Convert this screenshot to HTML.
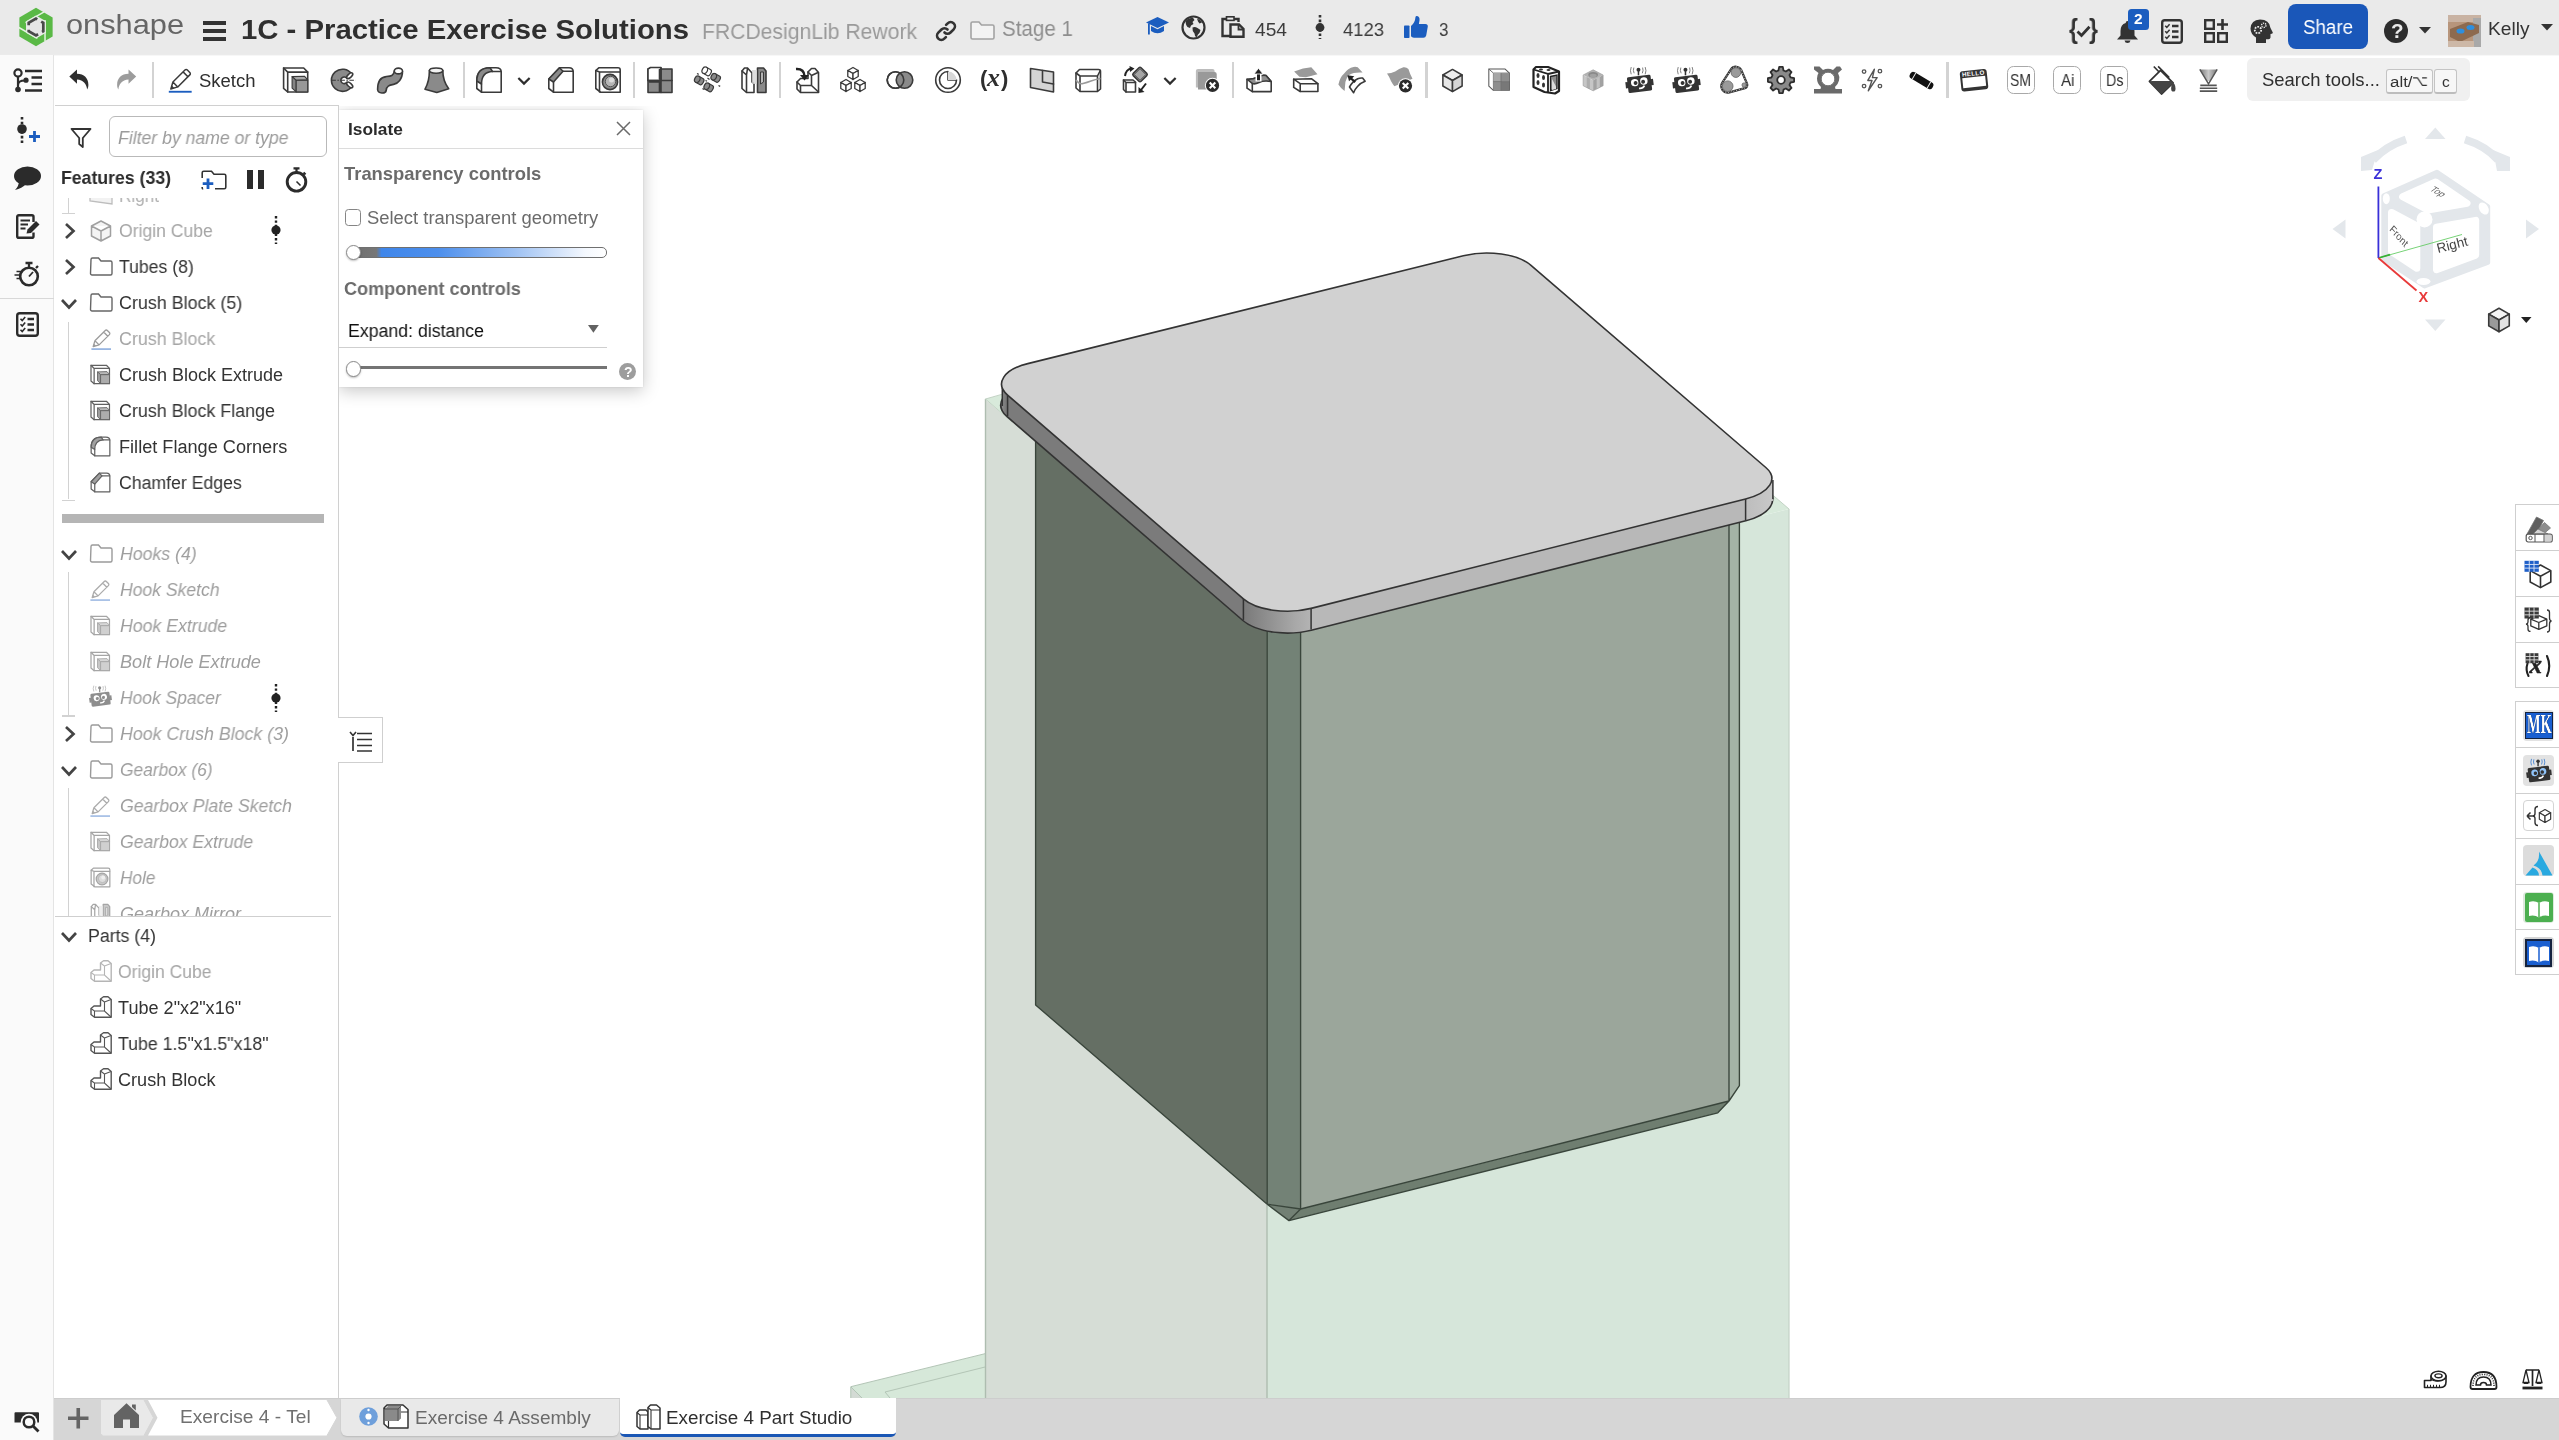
<!DOCTYPE html><html lang="en"><head><meta charset="utf-8"><title>1C - Practice Exercise Solutions | Exercise 4 Part Studio</title><style>
*{box-sizing:border-box;margin:0;padding:0}
html,body{width:2559px;height:1440px;overflow:hidden;background:#fff}
body{font-family:"Liberation Sans",sans-serif;color:#333;position:relative;font-size:18px}
.abs{position:absolute}
.t{position:absolute;white-space:nowrap;line-height:1;transform-origin:0 50%;will-change:transform}
.b{font-weight:bold}
.i{font-style:italic}
.g{color:#a3a3a3}
svg{overflow:visible}
.ic{position:absolute}
</style></head><body>
<svg id="model" width="2559" height="1440" viewBox="0 0 2559 1440" style="position:absolute;left:0;top:0">
<defs><linearGradient id="gB" x1="1244" x2="1312" y1="0" y2="0" gradientUnits="userSpaceOnUse"><stop offset="0" stop-color="#7a7a7a"/><stop offset="0.75" stop-color="#a8a8a8"/><stop offset="1" stop-color="#b4b4b4"/></linearGradient><linearGradient id="gR" x1="1746" x2="1773" y1="0" y2="0" gradientUnits="userSpaceOnUse"><stop offset="0" stop-color="#bdbdbd"/><stop offset="1" stop-color="#c8c8c8"/></linearGradient><linearGradient id="gL" x1="1002" x2="1008" y1="0" y2="0" gradientUnits="userSpaceOnUse"><stop offset="0" stop-color="#8a8a8a"/><stop offset="1" stop-color="#6e6e6e"/></linearGradient></defs>
<polygon points="850.8,1386.7 985,1353.7 985,1398 850.8,1398" fill="#d6e8d9"/>
<polygon points="850.8,1386.7 862.5,1398 850.8,1398" fill="#d3dad4"/>
<path d="M850.8,1386.7 L985,1353.7 M850.8,1386.7 L850.8,1398 M851,1387 L862,1398 M885,1392 L985,1367 M885,1392 L890,1398" stroke="#b3c5b6" stroke-width="1" fill="none"/>
<polygon points="985,399 1267.2,640.5 1267,1398 985,1398" fill="#d6ddd6"/>
<polygon points="1267.2,640.5 1789,509 1789,1398 1267,1398" fill="#d6e6da"/>
<polygon points="985,399 1507.3,265.9 1789,509 1267.2,640.5" fill="#d8eadb"/>
<path d="M985.5,399 V1398 M1267,1205 V1398" stroke="#aebdb0" stroke-width="1.4" fill="none"/><path d="M1789,509 V1398" stroke="#c3d2c6" stroke-width="1.2" fill="none"/>
<path d="M985.5,399 L1010,392 M985.5,399 L1012,422 M1789,509 L1768,491" stroke="#c3d3c5" stroke-width="1" fill="none"/>
<polygon points="1035.6,430 1267.2,630 1267.2,1204.2 1035.6,1005" fill="#656f64"/>
<polygon points="1267.2,620 1300.6,628 1300.6,1209 1267.2,1204.2" fill="#738276"/>
<polygon points="1300.6,628 1729,510 1729,1101 1300.6,1209" fill="#9ba69b"/>
<polygon points="1729,510 1739.4,508 1739.4,1085.6 1729,1101" fill="#a4b3a6"/>
<polygon points="1300.6,1209 1729,1101 1717.8,1112.8 1289,1220.6" fill="#6f7e70"/>
<polygon points="1267.2,1204.2 1300.6,1209 1289,1220.6" fill="#728074"/>
<path d="M1035.6,436 V1005 L1267.2,1204.2 L1289,1220.6 L1717.8,1112.8 L1729,1101 L1739.4,1085.6 V515 M1267.2,625 V1204.2 L1300.6,1209 V630 M1300.6,1209 L1289,1220.6 M1300.6,1209 L1729,1101 V520" stroke="#39453b" stroke-width="1.35" fill="none" stroke-linejoin="round"/>
<path d="M1531.0,286.3 L1531.0,286.3 C1517.9,275.0 1487.6,270.8 1463.3,276.8 L1027.8,384.6 C1003.5,390.6 994.5,404.7 1007.6,416.1 L1243.4,619.9 C1256.5,631.3 1286.8,635.6 1311.1,629.4 L1745.6,520.0 C1769.9,513.8 1778.9,499.8 1765.8,488.5 Z" fill="none" stroke="#333" stroke-width="3.2"/>
<rect x="1002.3" y="388" width="7" height="20" fill="url(#gL)"/>
<rect x="1760" y="481" width="12.9" height="20" fill="url(#gR)"/>
<path d="M1027.8,363.6 C1003.5,369.6 994.5,383.7 1007.6,395.1 L1007.6,416.1 C994.5,404.7 1003.5,390.6 1027.8,384.6 Z" fill="url(#gL)"/>
<path d="M1745.6,499.0 C1769.9,492.8 1778.9,478.8 1765.8,467.5 L1765.8,488.5 C1778.9,499.8 1769.9,513.8 1745.6,520.0 Z" fill="url(#gR)"/>
<path d="M1007.6,395.1 L1243.4,598.9 L1243.4,619.9 L1007.6,416.1 Z" fill="#7b7b7b"/>
<path d="M1311.1,608.4 L1745.6,499.0 L1745.6,520.0 L1311.1,629.4 Z" fill="#b8b8b8"/>
<path d="M1243.4,598.9 C1256.5,610.3 1286.8,614.6 1311.1,608.4 L1311.1,629.4 C1286.8,635.6 1256.5,631.3 1243.4,619.9 Z" fill="url(#gB)"/>
<path d="M1007.6,395.1 v21" stroke="#333" stroke-width="1.5"/>
<path d="M1243.4,598.9 v21" stroke="#333" stroke-width="1.5"/>
<path d="M1311.1,608.4 v21" stroke="#333" stroke-width="1.5"/>
<path d="M1745.6,499.0 v21" stroke="#333" stroke-width="1.5"/>
<path d="M1002.3,388 v18 M1772.9,480 v19" stroke="#333" stroke-width="1.5"/>
<path d="M1531.0,265.3 L1531.0,265.3 C1517.9,254.0 1487.6,249.8 1463.3,255.8 L1027.8,363.6 C1003.5,369.6 994.5,383.7 1007.6,395.1 L1243.4,598.9 C1256.5,610.3 1286.8,614.6 1311.1,608.4 L1745.6,499.0 C1769.9,492.8 1778.9,478.8 1765.8,467.5 Z" fill="#d1d1d1" stroke="#333" stroke-width="1.6"/>
</svg>
<div class="abs" style="left:0;top:0;width:2559px;height:53.500px;background:#eaeaea"></div>
<div class="abs" style="left:0;top:53.500px;width:2559px;height:2.200px;background:linear-gradient(#e5e5e5,#fdfdfd)"></div>
<div class="abs" style="left:0;top:55px;width:54px;height:1385px;background:#fafafa;border-right:1px solid #e4e4e4"></div>
<div class="abs" style="left:0;top:298px;width:54px;height:1px;background:#d8d8d8"></div>
<div class="abs" style="left:55px;top:105px;width:284px;height:1293px;background:#fff;border-top:1px solid #d0d0d0;border-right:1px solid #d0d0d0"></div>
<div class="abs" style="left:54px;top:1398px;width:2505px;height:42px;background:#d6d6d6"></div>
<svg class="ic" style="left:16.0px;top:6.3px;" width="40" height="42" viewBox="0 0 40 42"><g transform="translate(20,21)"><polygon points="0.00,-19.20 16.63,-9.60 16.63,9.60 0.00,19.20 -16.63,9.60 -16.63,-9.60" fill="#5ab946"/><polygon points="0.00,-11.52 9.98,-5.76 9.98,5.76 0.00,11.52 -9.98,5.76 -9.98,-5.76" fill="#eaeaea"/><path d="M9.02,-6.91 L9.02,14.59 M1.47,11.27 L-17.15,0.52 M-10.50,-4.36 L8.13,-15.11" stroke="#e4f3e0" stroke-width="1.500" fill="none"/><polygon points="0.00,-8.45 7.32,-4.22 7.32,4.22 0.00,8.45 -7.32,4.22 -7.32,-4.22" fill="#e6e6e6" stroke="#4a4a4a" stroke-width="2.700" stroke-dasharray="12.400 4.500" stroke-dashoffset="-6"/></g></svg>
<div class="t " style="left:66.4px;top:11.0px;font-size:28px;transform:scaleX(1.0985);color:#666;">onshape</div>
<svg class="ic" style="left:203.0px;top:19.5px;" width="23" height="22" viewBox="0 0 23 22"><path d="M0,3 H23 M0,11 H23 M0,19 H23" stroke="#333" stroke-width="4"/></svg>
<div class="t b" style="left:241.0px;top:15.8px;font-size:28px;transform:scaleX(1.0469);color:#2f2f2f;">1C - Practice Exercise Solutions</div>
<div class="t " style="left:702.0px;top:20.9px;font-size:22px;transform:scaleX(0.9610);color:#9a9a9a;">FRCDesignLib Rework</div>
<svg class="ic" style="left:935.0px;top:19.5px;" width="22" height="22" viewBox="0 0 22 22"><g fill="none" stroke="#333" stroke-width="2.6" stroke-linecap="round"><path d="M9.5,12.5 a4.2,4.2 0 0 0 6,0 l3.2,-3.2 a4.2,4.2 0 0 0 -6,-6 l-1.6,1.6"/><path d="M12.5,9.5 a4.2,4.2 0 0 0 -6,0 l-3.2,3.2 a4.2,4.2 0 0 0 6,6 l1.6,-1.6"/></g></svg>
<svg class="ic" style="left:969.5px;top:20.5px;" width="25" height="19" viewBox="0 0 25 19"><path d="M1,2.5 a1.5,1.5 0 0 1 1.5,-1.5 h6.5 l2.5,3 h11 a1.5,1.5 0 0 1 1.5,1.5 v11 a1.5,1.5 0 0 1 -1.5,1.5 h-20 a1.5,1.5 0 0 1 -1.5,-1.5 z" fill="#f3f3f3" stroke="#a3a3a3" stroke-width="1.6"/></svg>
<div class="t " style="left:1002.0px;top:18.1px;font-size:22px;transform:scaleX(0.9362);color:#8e8e8e;">Stage 1</div>
<svg class="ic" style="left:1146.0px;top:17.0px;" width="23" height="20" viewBox="0 0 23 20"><g fill="#1b5dbf"><polygon points="11.5,0 23,5.5 11.5,11 0,5.5"/><path d="M5,9 v5 q6.5,4.5 13,0 v-5 l-6.5,3.2 z"/><rect x="2" y="6.5" width="1.8" height="11"/></g></svg>
<svg class="ic" style="left:1181.0px;top:15.0px;" width="25" height="25" viewBox="0 0 25 25"><circle cx="12.500" cy="12.500" r="11" fill="#eaeaea" stroke="#333" stroke-width="2.200"/><path d="M5,5.500 Q8,2.500 12,2.800 L13.500,5 L11.500,7 L12.500,9 L10,10.500 L9,13 L6.500,12 Q4,9 5,5.500 Z M11.500,12.500 Q14,11.500 16.500,13 L19.500,15 Q19,18 17,19.500 L15.500,22.500 Q13.500,21 13.500,18.500 Q11,16 11.500,12.500 Z M16,3.500 Q19.500,4.500 21,7.500 L18.500,8.500 L17,6.500 Z" fill="#333"/></svg>
<svg class="ic" style="left:1220.5px;top:16.0px;" width="24" height="22" viewBox="0 0 24 22"><g fill="none" stroke="#333" stroke-width="2.4" stroke-linejoin="miter"><path d="M5.5,3 H1.5 V20 H9"/><path d="M13,3 H17.5 V6"/><rect x="5.5" y="0.8" width="7.5" height="3.6" stroke-width="1.6"/><path d="M9.5,8.500 H18 L22.5,13 V20.800 H9.500 Z"/><path d="M17.500,8.500 V13.500 H22.500" stroke-width="1.8"/></g></svg>
<div class="t " style="left:1254.5px;top:20.2px;font-size:19px;transform:scaleX(1.0095);color:#3c3c3c;">454</div>
<svg class="ic" style="left:1313.5px;top:15.0px;" width="12" height="24" viewBox="0 0 12 24"><path d="M6,0 V24" stroke="#333" stroke-width="2.6" stroke-dasharray="2.6 2"/><circle cx="6" cy="12.500" r="4.400" fill="#333"/></svg>
<div class="t " style="left:1342.5px;top:20.2px;font-size:19px;transform:scaleX(0.9701);color:#3c3c3c;">4123</div>
<svg class="ic" style="left:1403.5px;top:15.5px;" width="24" height="23" viewBox="0 0 24 23"><g fill="#1b5dbf"><rect x="0" y="9.500" width="5.500" height="12.500" rx="0.800"/><path d="M7,10 q4,-3 4.500,-9 q.3,-1.200 1.500,-1 q3,.6 2.500,4.500 l-.6,3.500 h6.500 q2.600,.2 2.400,2.600 l-1.600,8.800 q-.6,2.200 -2.800,2.300 h-9.500 q-2,-.2 -2.900,-1.500 z"/></g></svg>
<div class="t " style="left:1438.5px;top:20.2px;font-size:19px;transform:scaleX(0.8991);color:#3c3c3c;">3</div>
<div class="t b" style="left:2069.0px;top:15.6px;font-size:27px;transform:scaleX(0.8500);color:#333;">{</div>
<div class="t b" style="left:2088.5px;top:15.6px;font-size:27px;transform:scaleX(0.8500);color:#333;">}</div>
<svg class="ic" style="left:2075.5px;top:24.5px;" width="15" height="13" viewBox="0 0 15 13"><path d="M1.500,6.500 L5.500,10.500 L13.500,1.800" fill="none" stroke="#333" stroke-width="2.800"/></svg>
<svg class="ic" style="left:2115.5px;top:21.0px;" width="23" height="22" viewBox="0 0 23 22"><path d="M11.500,0 q1.800,0 1.800,2 q5.200,1.600 5.200,8 v4.500 l3.500,4 h-21 l3.500,-4 v-4.500 q0,-6.400 5.200,-8 q0,-2 1.800,-2 z M8.500,19.500 h6 q-.5,2.500 -3,2.500 q-2.500,0 -3,-2.500 z" fill="#333"/></svg>
<div class="abs" style="left:2127.500px;top:8.500px;width:21.500px;height:21.500px;background:#1b5dbf;border-radius:3.500px"></div>
<div class="t b" style="left:2134.0px;top:11.4px;font-size:15.5px;color:#fff;">2</div>
<svg class="ic" style="left:2160.5px;top:18.5px;" width="22" height="25" viewBox="0 0 22 25"><rect x="1.200" y="1.200" width="19.600" height="22.600" rx="2.500" fill="none" stroke="#333" stroke-width="2.400"/><path d="M11,7 H17.500 M11,12.500 H17.500 M11,18 H17.500" stroke="#333" stroke-width="2.400"/><path d="M4.200,6.800 l1.600,1.600 l2.800,-3.200 M4.200,12.300 l1.600,1.600 l2.800,-3.200 M4.200,17.800 l1.600,1.600 l2.800,-3.200" fill="none" stroke="#333" stroke-width="1.500"/></svg>
<svg class="ic" style="left:2203.5px;top:19.2px;" width="25" height="24" viewBox="0 0 25 24"><g fill="none" stroke="#333" stroke-width="2.400"><rect x="1.200" y="1.200" width="8.600" height="8.600"/><rect x="1.200" y="14.200" width="8.600" height="8.600"/><rect x="14.200" y="14.200" width="8.600" height="8.600"/><path d="M18.500,0 V11 M13,5.500 H24" stroke-width="2.600"/></g></svg>
<svg class="ic" style="left:2248.5px;top:19.2px;" width="24" height="24" viewBox="0 0 24 24"><path d="M11,0.500 q9.500,0 10.500,8.500 l2.300,4.500 q.3,1 -1,1.200 l-1.300,.2 v3.600 q-.2,1.800 -2,1.800 h-2.500 v3.700 h-10 v-5.500 q-5.500,-3.500 -5.500,-9 q.5,-8.500 9.500,-9 z" fill="#333"/><circle cx="9" cy="11" r="3.200" fill="none" stroke="#eaeaea" stroke-width="1.800" stroke-dasharray="1.700 1.100"/><circle cx="14.800" cy="6.300" r="2.200" fill="none" stroke="#eaeaea" stroke-width="1.400" stroke-dasharray="1.200 .9"/></svg>
<div class="abs" style="left:2287.700px;top:3.500px;width:80.600px;height:45.600px;background:#1a57b9;border-radius:8px"></div>
<div class="t " style="left:2303.0px;top:18.1px;font-size:19.5px;transform:scaleX(0.9610);color:#fff;">Share</div>
<div class="abs" style="left:2384.400px;top:18.900px;width:24px;height:24px;border-radius:12px;background:#2d2d2d"></div>
<div class="t b" style="left:2390.6px;top:20.8px;font-size:20.5px;color:#eaeaea;">?</div>
<svg class="ic" style="left:2419.0px;top:26.9px;" width="12" height="6.5" viewBox="0 0 12 6.5"><polygon points="0,0 12,0 6,6.500" fill="#333"/></svg>
<svg class="ic" style="left:2447.5px;top:14.5px;" width="33" height="32" viewBox="0 0 33 32"><rect width="33" height="32" rx="2" fill="#b7957b"/><rect x="0" y="0" width="33" height="7" fill="#c9b3a3"/><rect x="25" y="3" width="8" height="29" fill="#a9a9a9"/><polygon points="2,14 20,7 31,10 31,18 12,27 2,22" fill="#8d6a4f"/><ellipse cx="12.500" cy="16" rx="4" ry="2.600" fill="#2d8fe0"/><ellipse cx="22.500" cy="12.600" rx="4" ry="2.500" fill="#2d8fe0"/><rect x="0" y="26" width="26" height="6" fill="#cdb8a7"/></svg>
<div class="t " style="left:2488.3px;top:19.8px;font-size:18px;transform:scaleX(1.0637);color:#333;">Kelly</div>
<svg class="ic" style="left:2540.5px;top:23.8px;" width="12" height="6.5" viewBox="0 0 12 6.5"><polygon points="0,0 12,0 6,6.500" fill="#333"/></svg>
<svg class="ic" style="left:63.7px;top:65.0px;" width="29.5" height="29.5" viewBox="0 0 30 30"><path d="M5.4,11.8 L13.2,4.6 V9 C20.5,9 24.8,13.6 24.8,20 C24.8,22 24.3,23.6 23.5,25 C23.2,20 19.8,15 13.2,14.8 V19 Z" fill="#2e2e2e"/></svg>
<svg class="ic" style="left:112.2px;top:65.0px;" width="29.5" height="29.5" viewBox="0 0 30 30"><path d="M24.6,11.8 L16.8,4.6 V9 C9.5,9 5.2,13.6 5.2,20 C5.2,22 5.7,23.6 6.500,25 C6.800,20 10.200,15 16.800,14.800 V19 Z" fill="#9c9c9c"/></svg>
<div class="abs" style="left:151.8px;top:62px;width:2.500px;height:35.700px;background:#d3d3d3"></div>
<svg class="ic" style="left:165.5px;top:66.0px;" width="28" height="28" viewBox="0 0 30 30"><path d="M5.2,24.6 L7.4,17.2 L20.3,4.3 a1.8,1.800 0 0 1 2.600,0 l2.600,2.600 a1.800,1.800 0 0 1 0,2.600 L12.600,22.400 Z M7.400,17.200 L12.600,22.400 M18.300,6.300 L23.500,11.500" fill="none" stroke="#3a3a3a" stroke-width="1.6" stroke-linejoin="round" stroke-linecap="round"/><path d="M5.200,24.600 L6.300,21 L8.800,23.500 Z" fill="#3a3a3a"/><path d="M3,27.600 H27.500" stroke="#1b5dbf" stroke-width="2"/></svg>
<div class="t " style="left:199.4px;top:72.3px;font-size:18.3px;transform:scaleX(1.0117);color:#2f2f2f;">Sketch</div>
<svg class="ic" style="left:281.3px;top:65.0px;" width="30" height="30" viewBox="0 0 30 30"><path d="M2.600,3 H22.700 L26.700,7.100 V27 H6.700 L2.600,23.400 Z" fill="#fff" stroke="#3a3a3a" stroke-width="1.6" stroke-linejoin="round" stroke-linecap="round"/><path d="M2.600,3 L6.700,7.100 H26.700 M6.700,7.100 V27" fill="none" stroke="#3a3a3a" stroke-width="1.6" stroke-linejoin="round" stroke-linecap="round" stroke-width="1.200"/><polygon points="11.100,11.600 23.400,11.200 26.700,14.900 15.200,15.300" fill="#a8a8a8" stroke="#3a3a3a" stroke-width="1.100" stroke-linejoin="round"/><polygon points="11.100,11.600 15.200,15.300 15.200,26.800 11.100,23.100" fill="#858585" stroke="#3a3a3a" stroke-width="1.100" stroke-linejoin="round"/><rect x="15.200" y="15.300" width="11.500" height="11.600" fill="#989898" stroke="#3a3a3a" stroke-width="1.100"/></svg>
<svg class="ic" style="left:327.6px;top:65.0px;" width="30" height="30" viewBox="0 0 30 30"><path d="M23.800,9.200 A11.100,11.100 0 1 0 23.800,21.400 L18.800,17.300 A3.300,3.300 0 1 1 18.800,13.300 Z" fill="#8a8a8a" stroke="#3a3a3a" stroke-width="1.6" stroke-linejoin="round" stroke-linecap="round"/><ellipse cx="21.700" cy="10.700" rx="3.700" ry="1.800" transform="rotate(-42 21.700 10.700)" fill="#fff" stroke="#3a3a3a" stroke-width="1.6" stroke-linejoin="round" stroke-linecap="round" stroke-width="1.300"/><ellipse cx="21.700" cy="19.900" rx="3.700" ry="1.800" transform="rotate(42 21.700 19.900)" fill="#fff" stroke="#3a3a3a" stroke-width="1.6" stroke-linejoin="round" stroke-linecap="round" stroke-width="1.300"/><path d="M3.400,15.300 H27.500" stroke="#3a3a3a" stroke-width="1.100" stroke-dasharray="4.500 1.500 1.500 1.500"/></svg>
<svg class="ic" style="left:375.2px;top:65.0px;" width="30" height="30" viewBox="0 0 30 30"><path d="M2.600,24.500 C2.600,15 7,12 11.200,11.600 C15.500,11.200 19,11 19.300,6 L27.500,6.500 C27.500,14 23,18.500 18.600,19.400 C14,20.300 11.500,21 11.200,25.500 C10.500,29 3,29 2.600,24.500 Z" fill="#8a8a8a" stroke="#3a3a3a" stroke-width="1.6" stroke-linejoin="round" stroke-linecap="round"/><ellipse cx="23.400" cy="6" rx="4.100" ry="2.900" fill="#fff" stroke="#3a3a3a" stroke-width="1.6" stroke-linejoin="round" stroke-linecap="round" stroke-width="1.300"/></svg>
<svg class="ic" style="left:422.0px;top:65.0px;" width="30" height="30" viewBox="0 0 30 30"><path d="M7.400,5.600 C7.400,13 6,19 3,24.200 L14.800,27.500 L26.700,23.800 C23,19 20.800,13 20.800,5.600 Z" fill="#8a8a8a" stroke="#3a3a3a" stroke-width="1.6" stroke-linejoin="round" stroke-linecap="round"/><ellipse cx="14.100" cy="5.600" rx="6.700" ry="2.600" fill="#f2f2f2" stroke="#3a3a3a" stroke-width="1.6" stroke-linejoin="round" stroke-linecap="round" stroke-width="1.300"/></svg>
<div class="abs" style="left:462.5px;top:62px;width:2.500px;height:35.700px;background:#d3d3d3"></div>
<svg class="ic" style="left:474.3px;top:65.0px;" width="30" height="30" viewBox="0 0 30 30"><path d="M2.800,16 Q2.800,2.800 16,2.800 H22 Q27.200,2.800 27.200,7 V27.200 H7.500 L2.800,23.500 Z" fill="#fff" stroke="#3a3a3a" stroke-width="1.6" stroke-linejoin="round" stroke-linecap="round"/><path d="M2.800,16 Q2.800,2.800 16,2.800 L18.500,6.500 Q7.500,7 7.500,19 Z" fill="#8a8a8a" stroke="#3a3a3a" stroke-width="1.6" stroke-linejoin="round" stroke-linecap="round" stroke-width="1.300"/><path d="M7.500,19 V27.200 M18.500,6.500 H27" fill="none" stroke="#3a3a3a" stroke-width="1.6" stroke-linejoin="round" stroke-linecap="round" stroke-width="1.300"/></svg>
<svg class="ic" style="left:510.8px;top:67.5px;" width="26" height="26" viewBox="0 0 30 30"><path d="M8.500,11.500 L15,18 L21.500,11.500" fill="none" stroke="#2e2e2e" stroke-width="2.600"/></svg>
<svg class="ic" style="left:546.0px;top:65.0px;" width="30" height="30" viewBox="0 0 30 30"><path d="M2.800,14 L13.500,2.800 H23 Q27.200,2.800 27.200,7 V27.200 H7.500 L2.800,23.500 Z" fill="#fff" stroke="#3a3a3a" stroke-width="1.6" stroke-linejoin="round" stroke-linecap="round"/><path d="M2.800,14 L13.500,2.800 L17,6.300 L7.500,17 Z" fill="#8a8a8a" stroke="#3a3a3a" stroke-width="1.6" stroke-linejoin="round" stroke-linecap="round" stroke-width="1.300"/><path d="M7.500,17 V27.200 M17,6.300 H27" fill="none" stroke="#3a3a3a" stroke-width="1.6" stroke-linejoin="round" stroke-linecap="round" stroke-width="1.300"/></svg>
<svg class="ic" style="left:592.6px;top:65.0px;" width="30" height="30" viewBox="0 0 30 30"><path d="M2.800,5.500 L5.800,2.800 H25 Q27.200,2.800 27.200,5 V27.200 H7.500 L2.800,23.500 Z" fill="#fff" stroke="#3a3a3a" stroke-width="1.6" stroke-linejoin="round" stroke-linecap="round"/><path d="M2.800,5.500 L6.500,7 V27 M6.500,7 H27" fill="none" stroke="#3a3a3a" stroke-width="1.6" stroke-linejoin="round" stroke-linecap="round" stroke-width="1.300"/><circle cx="17" cy="17" r="7.600" fill="#8a8a8a" stroke="#3a3a3a" stroke-width="1.6" stroke-linejoin="round" stroke-linecap="round"/><circle cx="17.500" cy="16.500" r="5.200" fill="#b5b5b5" stroke="#555" stroke-width="1"/><circle cx="18.500" cy="15" r="2.500" fill="#ddd"/></svg>
<div class="abs" style="left:632.8px;top:62px;width:2.500px;height:35.700px;background:#d3d3d3"></div>
<svg class="ic" style="left:645.0px;top:65.0px;" width="30" height="30" viewBox="0 0 30 30"><rect x="3" y="4" width="24" height="23.500" fill="#8a8a8a" stroke="#3a3a3a" stroke-width="1.6" stroke-linejoin="round" stroke-linecap="round"/><polygon points="3,4 5.500,2.500 16,2.500 16,15.500 3,15.500" fill="#fff" stroke="#3a3a3a" stroke-width="1.6" stroke-linejoin="round" stroke-linecap="round" stroke-width="1.300"/><path d="M3,15.500 H27 M16,3 V27.500 M14.500,4.500 V14 M4.500,17 H14.500 V27" fill="none" stroke="#3a3a3a" stroke-width="1.6" stroke-linejoin="round" stroke-linecap="round" stroke-width="1.300"/></svg>
<svg class="ic" style="left:692.5px;top:65.0px;" width="30" height="30" viewBox="0 0 30 30"><g transform="translate(14 6.5) rotate(28)"><path d="M-2.500,-3.400 H2.500 A1.700,3.400 0 0 1 2.500,3.400 H-2.500 Z" fill="#fff" stroke="#3a3a3a" stroke-width="1.200"/><ellipse cx="-2.500" cy="0" rx="2.600" ry="3.400" fill="#fff" stroke="#3a3a3a" stroke-width="1.200"/></g><g transform="translate(6.5 15.5) rotate(28)"><path d="M-2.500,-3.400 H2.500 A1.700,3.400 0 0 1 2.500,3.400 H-2.500 Z" fill="#8a8a8a" stroke="#3a3a3a" stroke-width="1.200"/><ellipse cx="-2.500" cy="0" rx="2.600" ry="3.400" fill="#8a8a8a" stroke="#3a3a3a" stroke-width="1.200"/></g><g transform="translate(23 13) rotate(28)"><path d="M-2.500,-3.400 H2.500 A1.700,3.400 0 0 1 2.500,3.400 H-2.500 Z" fill="#8a8a8a" stroke="#3a3a3a" stroke-width="1.200"/><ellipse cx="-2.500" cy="0" rx="2.600" ry="3.400" fill="#8a8a8a" stroke="#3a3a3a" stroke-width="1.200"/></g><g transform="translate(16 22.5) rotate(28)"><path d="M-2.500,-3.400 H2.500 A1.700,3.400 0 0 1 2.500,3.400 H-2.500 Z" fill="#8a8a8a" stroke="#3a3a3a" stroke-width="1.200"/><ellipse cx="-2.500" cy="0" rx="2.600" ry="3.400" fill="#8a8a8a" stroke="#3a3a3a" stroke-width="1.200"/></g><path d="M4,8.500 l1.700,.8 M14.500,13 l2,1.500 M25.500,20.500 l1.700,.8 M9.500,23.500 l1.500,1 M12.500,15.500 l1.500,.8" stroke="#3a3a3a" stroke-width="1.300"/></svg>
<svg class="ic" style="left:739.3px;top:65.0px;" width="30" height="30" viewBox="0 0 30 30"><path d="M3,6 L5.500,3 H8.500 L13,8 V17 L15,19 V27.500 H7.500 L3,23.500 Z" fill="#fff" stroke="#3a3a3a" stroke-width="1.6" stroke-linejoin="round" stroke-linecap="round"/><path d="M3,6 L7.500,10 V27 M7.500,10 L8.500,3.500" fill="none" stroke="#3a3a3a" stroke-width="1.6" stroke-linejoin="round" stroke-linecap="round" stroke-width="1.200"/><path d="M27,6 L24.500,3 H18.500 V27.500 H27 Z" fill="#8a8a8a" stroke="#3a3a3a" stroke-width="1.6" stroke-linejoin="round" stroke-linecap="round"/><path d="M21.500,7 V19 L24.500,17 V7 Z" fill="#b5b5b5" stroke="#3a3a3a" stroke-width="1"/><rect x="13" y="5" width="5" height="14" fill="#d4d4d4" opacity=".8"/></svg>
<div class="abs" style="left:778.8px;top:62px;width:2.500px;height:35.700px;background:#d3d3d3"></div>
<svg class="ic" style="left:791.0px;top:65.0px;" width="30" height="30" viewBox="0 0 30 30"><path d="M6,17 L9.500,13.500 H17 V7 L20.500,3.500 H24 L27.500,7.500 V27.500 H9.500 L6,24 Z" fill="#fff" stroke="#3a3a3a" stroke-width="1.6" stroke-linejoin="round" stroke-linecap="round"/><path d="M6,17 L9.500,20.500 V27 M9.500,20.500 H20.500 L27.500,27 M20.500,20.500 V10.500 L17,7 M20.500,10.500 L27,7.500" fill="none" stroke="#3a3a3a" stroke-width="1.6" stroke-linejoin="round" stroke-linecap="round" stroke-width="1.200"/><path d="M5,4 Q13,3.500 13.500,11" fill="none" stroke="#222" stroke-width="2.400"/><polygon points="9,10 18,10 13.500,15.500" fill="#222"/></svg>
<svg class="ic" style="left:838.0px;top:65.0px;" width="30" height="30" viewBox="0 0 30 30"><polygon points="15,2.5 20.22,5.5 15,8.5 9.780000000000001,5.5" fill="#fff" stroke="#3a3a3a" stroke-width="1.3" stroke-linejoin="round"/><polygon points="9.780000000000001,5.5 15,8.5 15,14.5 9.780000000000001,11.5" fill="#fff" stroke="#3a3a3a" stroke-width="1.3" stroke-linejoin="round"/><polygon points="20.22,5.5 15,8.5 15,14.5 20.22,11.5" fill="#fff" stroke="#3a3a3a" stroke-width="1.3" stroke-linejoin="round"/><polygon points="8,14.5 13.219999999999999,17.5 8,20.5 2.7800000000000002,17.5" fill="#fff" stroke="#3a3a3a" stroke-width="1.3" stroke-linejoin="round"/><polygon points="2.7800000000000002,17.5 8,20.5 8,26.5 2.7800000000000002,23.5" fill="#fff" stroke="#3a3a3a" stroke-width="1.3" stroke-linejoin="round"/><polygon points="13.219999999999999,17.5 8,20.5 8,26.5 13.219999999999999,23.5" fill="#fff" stroke="#3a3a3a" stroke-width="1.3" stroke-linejoin="round"/><polygon points="22,14.5 27.22,17.5 22,20.5 16.78,17.5" fill="#fff" stroke="#3a3a3a" stroke-width="1.3" stroke-linejoin="round"/><polygon points="16.78,17.5 22,20.5 22,26.5 16.78,23.5" fill="#fff" stroke="#3a3a3a" stroke-width="1.3" stroke-linejoin="round"/><polygon points="27.22,17.5 22,20.5 22,26.5 27.22,23.5" fill="#fff" stroke="#3a3a3a" stroke-width="1.3" stroke-linejoin="round"/></svg>
<svg class="ic" style="left:885.0px;top:65.0px;" width="30" height="30" viewBox="0 0 30 30"><circle cx="10.500" cy="15" r="8.300" fill="#fff" stroke="#3a3a3a" stroke-width="1.6" stroke-linejoin="round" stroke-linecap="round"/><circle cx="19.500" cy="15" r="8.300" fill="#8a8a8a" stroke="#3a3a3a" stroke-width="1.6" stroke-linejoin="round" stroke-linecap="round"/><circle cx="10.500" cy="15" r="8.300" fill="none" stroke="#3a3a3a" stroke-width="1.6" stroke-linejoin="round" stroke-linecap="round"/></svg>
<svg class="ic" style="left:933.0px;top:65.0px;" width="30" height="30" viewBox="0 0 30 30"><circle cx="15" cy="15" r="12.300" fill="#fff" stroke="#3a3a3a" stroke-width="1.6" stroke-linejoin="round" stroke-linecap="round"/><path d="M15,6.500 A8.500,8.500 0 1 0 23.500,15 H15 Z" fill="#fff" stroke="#3a3a3a" stroke-width="1.6" stroke-linejoin="round" stroke-linecap="round"/><path d="M15,6.500 A8.500,8.500 0 0 1 23.500,15 H15 Z" fill="#d8d8d8"/></svg>
<div class="t b" style="left:980.0px;top:68.4px;font-size:22px;transform:scaleX(0.9500);color:#2e2e2e;">(</div>
<div class="t b" style="left:1001.0px;top:68.4px;font-size:22px;transform:scaleX(0.9500);color:#2e2e2e;">)</div>
<div class="t b i" style="left:986.500px;top:64.500px;font-size:26px;font-family:'Liberation Serif',serif;color:#2e2e2e">x</div>
<svg class="ic" style="left:1027.0px;top:65.0px;" width="30" height="30" viewBox="0 0 30 30"><polygon points="3.500,3.500 26.500,7 26.500,27 3.500,22.500" fill="#d4d4d4" stroke="#3a3a3a" stroke-width="1.6" stroke-linejoin="round" stroke-linecap="round"/><path d="M15.500,5.500 V17 L26.500,19" fill="none" stroke="#3a3a3a" stroke-width="1.6" stroke-linejoin="round" stroke-linecap="round"/></svg>
<svg class="ic" style="left:1072.6px;top:65.0px;" width="30" height="30" viewBox="0 0 30 30"><path d="M3,8 L6.500,4.500 H25.500 Q27.500,4.500 27.500,6.500 V24 L24.500,26.500 H7 L3,23 Z" fill="#fff" stroke="#3a3a3a" stroke-width="1.6" stroke-linejoin="round" stroke-linecap="round"/><path d="M3,8 L7,11 V26 M7,11 H24.500 L27.300,5.500 M24.500,11 V26" fill="none" stroke="#3a3a3a" stroke-width="1.6" stroke-linejoin="round" stroke-linecap="round" stroke-width="1.200"/><path d="M3,15 Q6,19.500 10,18.500 T18,16 T27.500,13.500" fill="none" stroke="#9a9a9a" stroke-width="1.500"/></svg>
<svg class="ic" style="left:1120.0px;top:65.0px;" width="30" height="30" viewBox="0 0 30 30"><polygon points="3.500,15 13,15 15.500,17 15.500,27 6,27 3.500,24.500" fill="#fff" stroke="#3a3a3a" stroke-width="1.6" stroke-linejoin="round" stroke-linecap="round"/><path d="M3.500,15 L6,17.500 V27 M6,17.500 H15.500" fill="none" stroke="#3a3a3a" stroke-width="1.6" stroke-linejoin="round" stroke-linecap="round" stroke-width="1.200"/><g transform="rotate(45 20 9.500)"><rect x="14.500" y="4" width="11" height="11" rx="1.500" fill="#8a8a8a" stroke="#3a3a3a" stroke-width="1.6" stroke-linejoin="round" stroke-linecap="round"/><rect x="16" y="5.500" width="8" height="8" fill="#a5a5a5" stroke="#555" stroke-width=".8"/></g><path d="M5,11 Q6,4.500 11,3.500" fill="none" stroke="#222" stroke-width="2"/><polygon points="9.500,1 14.500,3.500 10,7" fill="#222"/><path d="M26,18.500 L21,25" stroke="#222" stroke-width="2"/><polygon points="18.500,22 24.500,27 18.500,28" fill="#222"/></svg>
<svg class="ic" style="left:1156.6px;top:67.5px;" width="26" height="26" viewBox="0 0 30 30"><path d="M8.500,11.500 L15,18 L21.500,11.500" fill="none" stroke="#2e2e2e" stroke-width="2.600"/></svg>
<svg class="ic" style="left:1193.0px;top:65.0px;" width="30" height="30" viewBox="0 0 30 30"><path d="M2.900,6 Q2.900,4 5,4 H19.500 Q21.600,4 21.600,6 V7 H5 V22.500 H2.900 Z" fill="#bcbcbc"/><path d="M5,7 H21.500 Q23.700,7 23.700,9 V24.600 H5 Z" fill="#999"/><circle cx="19.500" cy="20.400" r="7.600" fill="#fff"/><circle cx="19.500" cy="20.400" r="6.600" fill="#2b2b2b"/><path d="M16.700,17.600 L22.300,23.200 M22.300,17.600 L16.700,23.200" stroke="#fff" stroke-width="2.100"/></svg>
<div class="abs" style="left:1231.6px;top:62px;width:2.500px;height:35.700px;background:#d3d3d3"></div>
<svg class="ic" style="left:1244.3px;top:65.0px;" width="30" height="30" viewBox="0 0 30 30"><path d="M3,14.200 Q9,14.500 13,12.500 Q18,9.500 22,10.500 L27.200,16.500 V26.600 H8.300 L3,23.200 Z" fill="#fff" stroke="#3a3a3a" stroke-width="1.6" stroke-linejoin="round" stroke-linecap="round"/><path d="M3,14.200 Q9,14.500 13,12.500 Q18,9.500 22,10.500 L27.200,16.500 Q20,15 15,17.500 Q11,19.500 8.300,18.500 Z" fill="#8f8f8f" stroke="#3a3a3a" stroke-width="1.6" stroke-linejoin="round" stroke-linecap="round" stroke-width="1.200"/><path d="M8.300,18.500 V26.600" stroke="#3a3a3a" stroke-width="1.6" stroke-linejoin="round" stroke-linecap="round" stroke-width="1.200"/><path d="M14.500,7 V16.500" stroke="#fff" stroke-width="6"/><path d="M14.500,7 V15.300" stroke="#222" stroke-width="3"/><polygon points="10,9 14.500,3.300 19,9" fill="#222" stroke="#fff" stroke-width=".8"/></svg>
<svg class="ic" style="left:1291.4px;top:65.0px;" width="30" height="30" viewBox="0 0 30 30"><polygon points="3.100,6.400 12,3.500 20.300,2.300 26.500,9.300 15,12.200 8.400,11.700" fill="#9a9a9a"/><polygon points="2.700,14.200 20.700,13.800 26.900,18.700 26.900,26.500 9.200,26.500 2.700,22.400" fill="#fff" stroke="#3a3a3a" stroke-width="1.6" stroke-linejoin="round" stroke-linecap="round"/><path d="M2.700,14.200 L9.200,18.700 V26.500 M9.200,18.700 H26.900" fill="none" stroke="#3a3a3a" stroke-width="1.6" stroke-linejoin="round" stroke-linecap="round" stroke-width="1.300"/></svg>
<svg class="ic" style="left:1337.4px;top:65.0px;" width="30" height="30" viewBox="0 0 30 30"><path d="M1.400,19.500 Q3,12 6.700,8.900 Q11,3 16.600,1.900 Q19,1.500 20.700,2.300 L25.600,7.600 Q17,7 12.500,9.700 Q9,13 8.400,17.100 L7.600,26.100 Q3.500,23 1.400,19.500 Z" fill="#9a9a9a"/><path d="M12.500,22 Q15.500,16.500 20.700,13.800 Q23,12.700 25.600,13 L28.100,16.300 Q23.500,18 20.700,21.200 Q18,24 16.600,27.700 Z" fill="#fff" stroke="#3a3a3a" stroke-width="1.6" stroke-linejoin="round" stroke-linecap="round" stroke-width="1.300"/><path d="M18.200,17.100 L13.500,13" stroke="#222" stroke-width="2.300"/><polygon points="10.500,10.200 17.300,11.200 12,16.300" fill="#222"/></svg>
<svg class="ic" style="left:1384.8px;top:65.0px;" width="30" height="30" viewBox="0 0 30 30"><path d="M2,8.500 Q6,8.500 10.200,6.400 Q14,3.500 18.400,2.300 Q21.500,2 23.400,3.900 Q25,9 27.500,13.800 L9.400,21.200 Q7.500,19 6.100,16.300 Q4.500,12 2,8.500 Z" fill="#9a9a9a"/><circle cx="20.500" cy="20.800" r="7.600" fill="#fff"/><circle cx="20.500" cy="20.800" r="6.600" fill="#2b2b2b"/><path d="M17.700,18 L23.300,23.600 M23.300,18 L17.700,23.600" stroke="#fff" stroke-width="2.100"/></svg>
<div class="abs" style="left:1425.0px;top:62px;width:2.500px;height:35.700px;background:#d3d3d3"></div>
<svg class="ic" style="left:1438.7px;top:66.5px;" width="27" height="27" viewBox="0 0 30 30"><polygon points="15,2.6999999999999993 25.701,8.85 15,15 4.2989999999999995,8.85" fill="#ededed" stroke="#3a3a3a" stroke-width="1.7" stroke-linejoin="round"/><polygon points="4.2989999999999995,8.85 15,15 15,27.3 4.2989999999999995,21.15" fill="#e6e6e6" stroke="#3a3a3a" stroke-width="1.7" stroke-linejoin="round"/><polygon points="25.701,8.85 15,15 15,27.3 25.701,21.15" fill="#d6d6d6" stroke="#3a3a3a" stroke-width="1.7" stroke-linejoin="round"/></svg>
<svg class="ic" style="left:1485.2px;top:66.0px;" width="28" height="28" viewBox="0 0 30 30"><polygon points="4.100,3.200 21.300,3.200 26.200,7.600 26.200,26.100 9,26.100 4.100,21.600" fill="#fff" stroke="#555" stroke-width="1.100" stroke-linejoin="round"/><path d="M4.100,3.200 L9,7.600 H26.200 M9,7.600 V26.100" fill="none" stroke="#666" stroke-width="1"/><rect x="9" y="7.600" width="8.200" height="9.100" fill="#a6a6a6"/><rect x="17.200" y="7.600" width="9" height="9.100" fill="#8e8e8e"/><rect x="9" y="16.700" width="8.200" height="9.400" fill="#8e8e8e"/><rect x="17.200" y="16.700" width="9" height="9.400" fill="#787878"/><path d="M17.200,7.600 V26.100 M9,16.700 H26.200" stroke="#6a6a6a" stroke-width=".8"/></svg>
<svg class="ic" style="left:1531.3px;top:65.0px;" width="30" height="30" viewBox="0 0 30 30"><path d="M2.500,4.500 L5,2 L17,2 L28,6.500 V26 L24,28.500 L13.500,27 L2.500,22 Z" fill="#fff" stroke="#222" stroke-width="2.200" stroke-linejoin="round"/><path d="M2.500,4.500 L17,9 V27.500 M17,9 L28,6.500" fill="none" stroke="#222" stroke-width="1.800"/><path d="M19.500,11.500 L26,10 V23.500 L19.500,25.500 Z" fill="#8a8a8a" stroke="#222" stroke-width="1.300"/><path d="M21,14 L25,21.500 V24 L21,25 Z" fill="#ddd"/><ellipse cx="7" cy="10.500" rx="1.500" ry="2.600" fill="#333"/><ellipse cx="12.500" cy="12.500" rx="1.500" ry="2.600" fill="#333"/><ellipse cx="7" cy="17.500" rx="1.500" ry="2.600" fill="#333"/><ellipse cx="12.500" cy="20" rx="1.500" ry="2.600" fill="#333"/><ellipse cx="10" cy="4.500" rx="2" ry=".9" fill="#333"/><ellipse cx="17.500" cy="5" rx="2" ry=".9" fill="#333"/></svg>
<svg class="ic" style="left:1579.8px;top:66.5px;" width="27" height="27" viewBox="0 0 30 30"><polygon points="14.600,3.100 25.700,8.900 14.600,14.600 3.500,8.900" fill="#b4b4b4"/><polygon points="3.500,8.900 14.600,14.600 14.600,26.500 3.500,20.800" fill="#c6c6c6"/><polygon points="25.700,8.900 14.600,14.600 14.600,26.500 25.700,20.800" fill="#a2a2a2"/><polygon points="7.500,11 11,12.800 11,24.700 7.500,22.900" fill="#adadad"/><polygon points="18.500,12.600 22,10.800 22,22.700 18.500,24.500" fill="#c2c2c2"/><ellipse cx="14.600" cy="8.600" rx="5.400" ry="3.100" fill="#8a8a8a"/><ellipse cx="14.600" cy="9.400" rx="3.800" ry="2" fill="#a2a2a2"/><polygon points="14.600,3.100 25.700,8.900 25.700,20.800 14.600,26.500 3.500,20.800 3.500,8.900" fill="none" stroke="#9a9a9a" stroke-width=".7"/></svg>
<svg class="ic" style="left:1624.3px;top:64.5px;" width="31" height="31" viewBox="0 0 30 30"><g transform="rotate(-7 15 18)"><rect x="3.500" y="10.500" width="23" height="15.500" rx="1.500" fill="#333"/><rect x="1.500" y="15" width="2.500" height="6" fill="#333"/><rect x="26" y="15" width="2.500" height="6" fill="#333"/><circle cx="10.500" cy="16.500" r="3.600" fill="#fff"/><circle cx="19.500" cy="16" r="3.600" fill="#fff"/><circle cx="11.300" cy="17" r="1.900" fill="#333"/><circle cx="18.700" cy="16.600" r="1.900" fill="#333"/><path d="M14,22.500 Q17.500,23.500 19.500,20.500" fill="none" stroke="#fff" stroke-width="1.700"/></g><path d="M14,10 V5.500" stroke="#333" stroke-width="1.500"/><circle cx="14" cy="4.500" r="1.900" fill="#333"/><path d="M9.500,2.500 q-1,3 .3,5.500 M7,2 q-1.500,3.500 0,7 M18,2.500 q1,3 -.3,5.500 M20.500,2 q1.500,3.500 0,7" fill="none" stroke="#777" stroke-width=".9"/></svg>
<svg class="ic" style="left:1671.3px;top:64.5px;" width="31" height="31" viewBox="0 0 30 30"><g transform="rotate(-7 15 18)"><rect x="3.500" y="10.500" width="23" height="15.500" rx="1.500" fill="#333"/><rect x="1.500" y="15" width="2.500" height="6" fill="#333"/><rect x="26" y="15" width="2.500" height="6" fill="#333"/><circle cx="10.500" cy="16.500" r="3.600" fill="#fff"/><circle cx="19.500" cy="16" r="3.600" fill="#fff"/><circle cx="11.300" cy="17" r="1.900" fill="#333"/><circle cx="18.700" cy="16.600" r="1.900" fill="#333"/><path d="M14,22.500 Q17.500,23.500 19.500,20.500" fill="none" stroke="#fff" stroke-width="1.700"/></g><path d="M14,10 V5.500" stroke="#333" stroke-width="1.500"/><circle cx="14" cy="4.500" r="1.900" fill="#333"/><path d="M9.500,2.500 q-1,3 .3,5.500 M7,2 q-1.500,3.500 0,7 M18,2.500 q1,3 -.3,5.500 M20.500,2 q1.500,3.500 0,7" fill="none" stroke="#777" stroke-width=".9"/></svg>
<svg class="ic" style="left:1718.8px;top:65.0px;" width="30" height="30" viewBox="0 0 30 30"><path d="M22.33,5.29 L28.05,18.75 A3.20,3.20 0 0 1 25.95,23.09 L10.40,27.37 A6.40,6.40 0 0 1 3.33,17.72 L11.95,4.40 A5.90,5.90 0 0 1 22.33,5.29 Z" fill="#fff" stroke="#333" stroke-width="2.200" stroke-linejoin="round"/><circle cx="16.9" cy="7.6" r="4.80" fill="#9a9a9a" stroke="#6a6a6a" stroke-width=".9"/><circle cx="25.1" cy="20" r="2.10" fill="#9a9a9a" stroke="#6a6a6a" stroke-width=".9"/><circle cx="8.7" cy="21.2" r="5.30" fill="#9a9a9a" stroke="#6a6a6a" stroke-width=".9"/><path d="M22.33,5.29 L28.05,18.75 A3.20,3.20 0 0 1 25.95,23.09 L10.40,27.37 A6.40,6.40 0 0 1 3.33,17.72 L11.95,4.40 A5.90,5.90 0 0 1 22.33,5.29 Z" fill="none" stroke="#ddd" stroke-width=".8" stroke-dasharray="1.200 1.600"/></svg>
<svg class="ic" style="left:1765.5px;top:65.0px;" width="30" height="30" viewBox="0 0 30 30"><polygon points="13.2,1.9 16.8,1.9 17.5,5.5 19.9,6.5 22.9,4.5 25.5,7.1 23.5,10.1 24.5,12.4 28.1,13.2 28.1,16.8 24.5,17.5 23.5,19.9 25.5,22.9 22.9,25.5 19.9,23.5 17.6,24.5 16.8,28.1 13.2,28.1 12.5,24.5 10.1,23.5 7.1,25.5 4.5,22.9 6.5,19.9 5.5,17.6 1.9,16.8 1.9,13.2 5.5,12.5 6.5,10.1 4.5,7.1 7.1,4.5 10.1,6.5 12.4,5.5" fill="#8a8a8a" stroke="#2e2e2e" stroke-width="1.800" stroke-linejoin="round"/><circle cx="15" cy="15" r="3.800" fill="#fff" stroke="#2e2e2e" stroke-width="1.800"/></svg>
<svg class="ic" style="left:1813.0px;top:65.0px;" width="30" height="30" viewBox="0 0 30 30"><path d="M1,1.500 H6.500 L10,5 Q15,2.500 20,5 L23.500,1.500 H27 L29,4.500 L25,8 Q27,11.500 26,15.500 Q25,19.500 22,22 L22.500,24 H29 V28.500 H1 V24 H7.500 L8,22 Q4,18.500 4,13.500 Q4,10 5.500,8 L1,4.500 Z" fill="#6a6a6a"/><circle cx="15" cy="14" r="6.800" fill="#fff"/><circle cx="15" cy="14" r="6.800" fill="none" stroke="#777" stroke-width="1"/></svg>
<svg class="ic" style="left:1858.0px;top:66.0px;" width="28" height="28" viewBox="0 0 30 30"><path d="M17.500,3.500 L10.500,15.500 H15 L11,26.500 L20.500,12.500 H15.500 Z" fill="#fff" stroke="#555" stroke-width="1.500" stroke-linejoin="round"/><g fill="none" stroke="#555" stroke-width="1.400"><circle cx="6.500" cy="6" r="1.900"/><circle cx="23.500" cy="5.500" r="1.900"/><circle cx="6.500" cy="21.500" r="1.900"/><circle cx="23.500" cy="21.500" r="1.900"/></g></svg>
<svg class="ic" style="left:1907.4px;top:65.5px;" width="29" height="29" viewBox="0 0 30 30"><g transform="rotate(31 15 15)"><rect x="1.500" y="11.300" width="27" height="7.400" rx="3.200" fill="#111"/><path d="M6,11.500 V18.500 M24,11.500 V18.500" stroke="#eee" stroke-width="1"/></g></svg>
<div class="abs" style="left:1946.1px;top:62px;width:2.500px;height:35.700px;background:#d3d3d3"></div>
<svg class="ic" style="left:1958.9px;top:65.0px;" width="30" height="30" viewBox="0 0 30 30"><g transform="rotate(-6 15 15)"><rect x="1.500" y="5" width="27" height="20.500" rx="3" fill="#333"/><rect x="3.500" y="12" width="23" height="10" fill="#fff"/><text x="15" y="10.600" font-size="6.200" font-weight="bold" fill="#fff" text-anchor="middle" font-family="Liberation Sans,sans-serif" letter-spacing=".3">HELLO</text></g></svg>
<div class="abs" style="left:2006.8px;top:66.200px;width:28px;height:27.500px;border:1.300px solid #a9a9a9;border-radius:6.500px;background:#fff"></div>
<div class="t " style="left:2010.3px;top:71.8px;font-size:17px;transform:scaleX(0.8235);color:#333;">SM</div>
<div class="abs" style="left:2053.3px;top:66.200px;width:28px;height:27.500px;border:1.300px solid #a9a9a9;border-radius:6.500px;background:#fff"></div>
<div class="t " style="left:2060.6px;top:71.8px;font-size:17px;transform:scaleX(0.8931);color:#333;">Ai</div>
<div class="abs" style="left:2100.4px;top:66.200px;width:28px;height:27.500px;border:1.300px solid #a9a9a9;border-radius:6.500px;background:#fff"></div>
<div class="t " style="left:2105.7px;top:71.8px;font-size:17px;transform:scaleX(0.8423);color:#333;">Ds</div>
<svg class="ic" style="left:2147.0px;top:65.0px;" width="29" height="29" viewBox="0 0 30 30"><path d="M7,1.500 L20,15 M11.500,1.500 L23,13" stroke="#333" stroke-width="1.700" fill="none"/><path d="M2.500,17 L14,5.500 L27,18.500 L15,30 Z" fill="#fff" stroke="#333" stroke-width="1.800" stroke-linejoin="round"/><path d="M2.500,17 L5,16.500 H25 L27,18.500 L15,30 Z" fill="#444"/><path d="M25.500,17 Q29.500,19 29.500,24.500 Q29.500,27.500 27.300,27.500 Q25,27.500 25,24.500 Z" fill="#444"/></svg>
<svg class="ic" style="left:2193.9px;top:65.5px;" width="29" height="29" viewBox="0 0 30 30"><defs><linearGradient id="nz" x1="0" x2="1"><stop offset="0" stop-color="#777"/><stop offset=".5" stop-color="#c8c8c8"/><stop offset="1" stop-color="#777"/></linearGradient></defs><polygon points="6,3.500 24,3.500 16.500,15.500 13.500,15.500" fill="url(#nz)"/><path d="M6,3.500 L15,18.500 L24,3.500" fill="none" stroke="#555" stroke-width="1.500"/><path d="M6.500,20 H23.500 M6,23 H24 M6,26 H24" stroke="#555" stroke-width="1.700"/></svg>
<div class="abs" style="left:2247px;top:58.300px;width:223px;height:42.700px;background:#f0f0f0;border-radius:6px"></div>
<div class="t " style="left:2261.7px;top:71.9px;font-size:17.8px;transform:scaleX(1.0372);color:#2f2f2f;">Search tools...</div>
<div class="abs" style="left:2385.900px;top:69.400px;width:47px;height:24.600px;background:#f7f7f7;border:1px solid #c4c4c4;border-bottom:2px solid #bdbdbd;border-radius:3px"></div>
<div class="abs" style="left:2434.300px;top:69.400px;width:22.500px;height:24.600px;background:#f7f7f7;border:1px solid #c4c4c4;border-bottom:2px solid #bdbdbd;border-radius:3px"></div>
<div class="t " style="left:2390.0px;top:74.4px;font-size:15.5px;transform:scaleX(1.0882);color:#333;">alt/</div>
<div class="t" style="left:2411.500px;top:73.500px;font-size:15px;font-family:'DejaVu Sans',sans-serif;color:#333;transform:scaleX(.92)">&#x2325;</div>
<div class="t " style="left:2442.0px;top:74.4px;font-size:15.5px;color:#333;">c</div>
<svg class="ic" style="left:69.5px;top:127.0px;" width="22" height="22" viewBox="0 0 22 22"><path d="M1.500,2 H20.500 L12.800,11 V20 L9.200,17 V11 Z" fill="none" stroke="#333" stroke-width="1.800" stroke-linejoin="round"/></svg>
<div class="abs" style="left:109px;top:116px;width:218px;height:41px;border:1.300px solid #b9b9b9;border-radius:6px;background:#fff"></div>
<div class="t i" style="left:118.2px;top:128.8px;font-size:18px;transform:scaleX(0.9796);color:#9b9b9b;">Filter by name or type</div>
<div class="t b" style="left:61.2px;top:169.3px;font-size:18.5px;transform:scaleX(0.9553);color:#2b2b2b;">Features (33)</div>
<svg class="ic" style="left:200.5px;top:169.5px;" width="26" height="20" viewBox="0 0 26 20"><path d="M4,1.200 h6.500 l2.500,3 h10.300 a1.500,1.500 0 0 1 1.500,1.500 v11.600 a1.500,1.500 0 0 1 -1.500,1.500 h-9.300 M1.200,8 v-5.300 a1.500,1.500 0 0 1 1.500,-1.500 h1.300" fill="none" stroke="#333" stroke-width="1.600"/><path d="M1.200,17 v1 a1,1 0 0 0 1,1" fill="none" stroke="#333" stroke-width="1.600"/><path d="M7,8.500 V19 M1.700,13.700 H12.300" stroke="#1b5dbf" stroke-width="2.800"/></svg>
<div class="abs" style="left:247px;top:170px;width:5.800px;height:19px;background:#2b2b2b"></div><div class="abs" style="left:258px;top:170px;width:5.800px;height:19px;background:#2b2b2b"></div>
<svg class="ic" style="left:285.3px;top:166.5px;" width="23" height="25" viewBox="0 0 23 25"><circle cx="11.500" cy="14.800" r="9.300" fill="none" stroke="#2b2b2b" stroke-width="2.900"/><path d="M8.500,1.300 H14.500 M11.500,1.300 V5 M18.500,5.500 L20.500,7.500" stroke="#2b2b2b" stroke-width="2.200"/><path d="M11.500,14.500 L15.500,18.500" stroke="#2b2b2b" stroke-width="1.600"/></svg>
<div class="abs" style="left:55px;top:197.500px;width:283px;height:718.500px;overflow:hidden">
<div class="abs" style="left:13px;top:0.0px;width:1.200px;height:15.0px;background:#d2d2d2"></div>
<div class="abs" style="left:7px;top:15.0px;width:13px;height:1.200px;background:#d2d2d2"></div>
<svg class="ic" style="left:34.0px;top:-11.0px;" width="24" height="18" viewBox="0 0 24 18"><polygon points="1,1 23,3 23,17 1,14" fill="#f2f2f2" stroke="#bdbdbd" stroke-width="1.300"/></svg>
<div class="t " style="left:63.7px;top:-10.7px;font-size:18px;transform:scaleX(0.9520);color:#b0b0b0;">Right</div>
<svg class="ic" style="left:8.5px;top:24.5px;" width="12" height="18" viewBox="0 0 12 18"><path d="M2,2 L9.500,9 L2,16" fill="none" stroke="#444" stroke-width="2.700"/></svg>
<svg class="ic" style="left:35.0px;top:22.5px;" width="22" height="22" viewBox="0 0 22 22"><path d="M11,1 L20.500,6 V16 L11,21 L1.500,16 V6 Z M1.500,6 L11,11 L20.500,6 M11,11 V21" fill="#f4f4f4" stroke="#a0a0a0" stroke-width="1.500" stroke-linejoin="round"/></svg>
<div class="t " style="left:63.7px;top:24.6px;font-size:18px;transform:scaleX(0.9767);color:#a6a6a6;">Origin Cube</div>
<svg class="ic" style="left:215.6px;top:18.5px;" width="10" height="28" viewBox="0 0 10 28"><path d="M5,0 V28" stroke="#222" stroke-width="2.400" stroke-dasharray="2.400 2"/><circle cx="5" cy="14" r="4.600" fill="#222"/></svg>
<svg class="ic" style="left:8.5px;top:60.5px;" width="12" height="18" viewBox="0 0 12 18"><path d="M2,2 L9.500,9 L2,16" fill="none" stroke="#444" stroke-width="2.700"/></svg>
<svg class="ic" style="left:34.5px;top:59.0px;" width="23" height="19" viewBox="0 0 23 19"><path d="M1,2.500 a1.500,1.500 0 0 1 1.500,-1.500 h6 l2.500,3 h9.500 a1.500,1.500 0 0 1 1.500,1.500 v11 a1.500,1.500 0 0 1 -1.500,1.500 h-18.500 a1.500,1.500 0 0 1 -1.500,-1.500 z" fill="#fff" stroke="#666" stroke-width="1.400"/></svg>
<div class="t " style="left:63.7px;top:60.6px;font-size:18px;transform:scaleX(0.9810);color:#333;">Tubes (8)</div>
<svg class="ic" style="left:5.2px;top:100.0px;" width="18" height="12" viewBox="0 0 18 12"><path d="M2,2 L9,9.500 L16,2" fill="none" stroke="#444" stroke-width="2.700"/></svg>
<svg class="ic" style="left:34.5px;top:95.0px;" width="23" height="19" viewBox="0 0 23 19"><path d="M1,2.500 a1.500,1.500 0 0 1 1.500,-1.500 h6 l2.500,3 h9.500 a1.500,1.500 0 0 1 1.500,1.500 v11 a1.500,1.500 0 0 1 -1.500,1.500 h-18.500 a1.500,1.500 0 0 1 -1.500,-1.500 z" fill="#fff" stroke="#666" stroke-width="1.400"/></svg>
<div class="t " style="left:63.7px;top:96.6px;font-size:18px;transform:scaleX(0.9941);color:#333;">Crush Block (5)</div>
<div class="abs" style="left:13px;top:124.10000000000002px;width:1.200px;height:177.89999999999998px;background:#d2d2d2"></div>
<div class="abs" style="left:7px;top:302.0px;width:13px;height:1.200px;background:#d2d2d2"></div>
<svg class="ic" style="left:33.5px;top:129.0px;opacity:0.5;" width="24" height="24" viewBox="0 0 30 30"><path d="M5.2,24.6 L7.4,17.2 L20.3,4.3 a1.8,1.800 0 0 1 2.600,0 l2.600,2.600 a1.800,1.800 0 0 1 0,2.600 L12.600,22.400 Z M7.400,17.200 L12.600,22.400 M18.300,6.300 L23.500,11.500" fill="none" stroke="#3a3a3a" stroke-width="1.6" stroke-linejoin="round" stroke-linecap="round"/><path d="M5.200,24.600 L6.300,21 L8.800,23.500 Z" fill="#3a3a3a"/><path d="M3,27.600 H27.500" stroke="#1b5dbf" stroke-width="2"/></svg>
<div class="t " style="left:63.7px;top:132.6px;font-size:18px;transform:scaleX(0.9925);color:#a6a6a6;">Crush Block</div>
<svg class="ic" style="left:34.0px;top:165.5px;opacity:0.8;" width="23" height="23" viewBox="0 0 30 30"><path d="M2.600,3 H22.700 L26.700,7.100 V27 H6.700 L2.600,23.400 Z" fill="#fff" stroke="#3a3a3a" stroke-width="1.6" stroke-linejoin="round" stroke-linecap="round"/><path d="M2.600,3 L6.700,7.100 H26.700 M6.700,7.100 V27" fill="none" stroke="#3a3a3a" stroke-width="1.6" stroke-linejoin="round" stroke-linecap="round" stroke-width="1.200"/><polygon points="11.100,11.600 23.400,11.200 26.700,14.900 15.200,15.300" fill="#a8a8a8" stroke="#3a3a3a" stroke-width="1.100" stroke-linejoin="round"/><polygon points="11.100,11.600 15.200,15.300 15.200,26.800 11.100,23.100" fill="#858585" stroke="#3a3a3a" stroke-width="1.100" stroke-linejoin="round"/><rect x="15.200" y="15.300" width="11.500" height="11.600" fill="#989898" stroke="#3a3a3a" stroke-width="1.100"/></svg>
<div class="t " style="left:63.7px;top:168.6px;font-size:18px;color:#333;">Crush Block Extrude</div>
<svg class="ic" style="left:34.0px;top:201.5px;opacity:0.8;" width="23" height="23" viewBox="0 0 30 30"><path d="M2.600,3 H22.700 L26.700,7.100 V27 H6.700 L2.600,23.400 Z" fill="#fff" stroke="#3a3a3a" stroke-width="1.6" stroke-linejoin="round" stroke-linecap="round"/><path d="M2.600,3 L6.700,7.100 H26.700 M6.700,7.100 V27" fill="none" stroke="#3a3a3a" stroke-width="1.6" stroke-linejoin="round" stroke-linecap="round" stroke-width="1.200"/><polygon points="11.100,11.600 23.400,11.200 26.700,14.900 15.200,15.300" fill="#a8a8a8" stroke="#3a3a3a" stroke-width="1.100" stroke-linejoin="round"/><polygon points="11.100,11.600 15.200,15.300 15.200,26.800 11.100,23.100" fill="#858585" stroke="#3a3a3a" stroke-width="1.100" stroke-linejoin="round"/><rect x="15.200" y="15.300" width="11.500" height="11.600" fill="#989898" stroke="#3a3a3a" stroke-width="1.100"/></svg>
<div class="t " style="left:63.7px;top:204.6px;font-size:18px;transform:scaleX(0.9932);color:#333;">Crush Block Flange</div>
<svg class="ic" style="left:34.0px;top:237.5px;opacity:0.8;" width="23" height="23" viewBox="0 0 30 30"><path d="M2.800,16 Q2.800,2.800 16,2.800 H22 Q27.200,2.800 27.200,7 V27.200 H7.500 L2.800,23.500 Z" fill="#fff" stroke="#3a3a3a" stroke-width="1.6" stroke-linejoin="round" stroke-linecap="round"/><path d="M2.800,16 Q2.800,2.800 16,2.800 L18.500,6.500 Q7.500,7 7.500,19 Z" fill="#8a8a8a" stroke="#3a3a3a" stroke-width="1.6" stroke-linejoin="round" stroke-linecap="round" stroke-width="1.300"/><path d="M7.500,19 V27.200 M18.500,6.500 H27" fill="none" stroke="#3a3a3a" stroke-width="1.6" stroke-linejoin="round" stroke-linecap="round" stroke-width="1.300"/></svg>
<div class="t " style="left:63.7px;top:240.6px;font-size:18px;transform:scaleX(1.0075);color:#333;">Fillet Flange Corners</div>
<svg class="ic" style="left:34.0px;top:273.5px;opacity:0.8;" width="23" height="23" viewBox="0 0 30 30"><path d="M2.800,14 L13.500,2.800 H23 Q27.200,2.800 27.200,7 V27.200 H7.500 L2.800,23.500 Z" fill="#fff" stroke="#3a3a3a" stroke-width="1.6" stroke-linejoin="round" stroke-linecap="round"/><path d="M2.800,14 L13.500,2.800 L17,6.300 L7.500,17 Z" fill="#8a8a8a" stroke="#3a3a3a" stroke-width="1.6" stroke-linejoin="round" stroke-linecap="round" stroke-width="1.300"/><path d="M7.500,17 V27.200 M17,6.300 H27" fill="none" stroke="#3a3a3a" stroke-width="1.6" stroke-linejoin="round" stroke-linecap="round" stroke-width="1.300"/></svg>
<div class="t " style="left:63.7px;top:276.6px;font-size:18px;transform:scaleX(0.9820);color:#333;">Chamfer Edges</div>
<div class="abs" style="left:7px;top:316.20000000000005px;width:262px;height:9.200px;background:#b5b5b5"></div>
<svg class="ic" style="left:5.2px;top:351.0px;" width="18" height="12" viewBox="0 0 18 12"><path d="M2,2 L9,9.500 L16,2" fill="none" stroke="#444" stroke-width="2.700"/></svg>
<svg class="ic" style="left:34.5px;top:346.5px;" width="23" height="19" viewBox="0 0 23 19"><path d="M1,2.500 a1.500,1.500 0 0 1 1.500,-1.500 h6 l2.500,3 h9.500 a1.500,1.500 0 0 1 1.500,1.500 v11 a1.500,1.500 0 0 1 -1.500,1.500 h-18.500 a1.500,1.500 0 0 1 -1.500,-1.500 z" fill="#fff" stroke="#9a9a9a" stroke-width="1.400"/></svg>
<div class="t i" style="left:64.8px;top:347.6px;font-size:18px;transform:scaleX(0.9831);color:#9e9e9e;">Hooks (4)</div>
<div class="abs" style="left:13px;top:374.9px;width:1.200px;height:143.0px;background:#d2d2d2"></div>
<div class="abs" style="left:7px;top:517.9px;width:13px;height:1.200px;background:#d2d2d2"></div>
<svg class="ic" style="left:33.0px;top:380.0px;opacity:0.42;" width="24" height="24" viewBox="0 0 30 30"><path d="M5.2,24.6 L7.4,17.2 L20.3,4.3 a1.8,1.800 0 0 1 2.600,0 l2.600,2.600 a1.800,1.800 0 0 1 0,2.600 L12.600,22.400 Z M7.400,17.200 L12.600,22.400 M18.300,6.300 L23.500,11.500" fill="none" stroke="#3a3a3a" stroke-width="1.6" stroke-linejoin="round" stroke-linecap="round"/><path d="M5.200,24.600 L6.300,21 L8.800,23.500 Z" fill="#3a3a3a"/><path d="M3,27.600 H27.500" stroke="#1b5dbf" stroke-width="2"/></svg>
<div class="t i" style="left:64.8px;top:383.6px;font-size:18px;transform:scaleX(0.9760);color:#9e9e9e;">Hook Sketch</div>
<svg class="ic" style="left:33.5px;top:416.5px;opacity:0.45;" width="23" height="23" viewBox="0 0 30 30"><path d="M2.600,3 H22.700 L26.700,7.100 V27 H6.700 L2.600,23.400 Z" fill="#fff" stroke="#3a3a3a" stroke-width="1.6" stroke-linejoin="round" stroke-linecap="round"/><path d="M2.600,3 L6.700,7.100 H26.700 M6.700,7.100 V27" fill="none" stroke="#3a3a3a" stroke-width="1.6" stroke-linejoin="round" stroke-linecap="round" stroke-width="1.200"/><polygon points="11.100,11.600 23.400,11.200 26.700,14.900 15.200,15.300" fill="#a8a8a8" stroke="#3a3a3a" stroke-width="1.100" stroke-linejoin="round"/><polygon points="11.100,11.600 15.200,15.300 15.200,26.800 11.100,23.100" fill="#858585" stroke="#3a3a3a" stroke-width="1.100" stroke-linejoin="round"/><rect x="15.200" y="15.300" width="11.500" height="11.600" fill="#989898" stroke="#3a3a3a" stroke-width="1.100"/></svg>
<div class="t i" style="left:64.8px;top:419.6px;font-size:18px;transform:scaleX(0.9830);color:#9e9e9e;">Hook Extrude</div>
<svg class="ic" style="left:33.5px;top:452.5px;opacity:0.45;" width="23" height="23" viewBox="0 0 30 30"><path d="M2.600,3 H22.700 L26.700,7.100 V27 H6.700 L2.600,23.400 Z" fill="#fff" stroke="#3a3a3a" stroke-width="1.6" stroke-linejoin="round" stroke-linecap="round"/><path d="M2.600,3 L6.700,7.100 H26.700 M6.700,7.100 V27" fill="none" stroke="#3a3a3a" stroke-width="1.6" stroke-linejoin="round" stroke-linecap="round" stroke-width="1.200"/><polygon points="11.100,11.600 23.400,11.200 26.700,14.900 15.200,15.300" fill="#a8a8a8" stroke="#3a3a3a" stroke-width="1.100" stroke-linejoin="round"/><polygon points="11.100,11.600 15.200,15.300 15.200,26.800 11.100,23.100" fill="#858585" stroke="#3a3a3a" stroke-width="1.100" stroke-linejoin="round"/><rect x="15.200" y="15.300" width="11.500" height="11.600" fill="#989898" stroke="#3a3a3a" stroke-width="1.100"/></svg>
<div class="t i" style="left:64.8px;top:455.6px;font-size:18px;transform:scaleX(1.0060);color:#9e9e9e;">Bolt Hole Extrude</div>
<svg class="ic" style="left:32.5px;top:486.5px;opacity:0.55;" width="25" height="25" viewBox="0 0 30 30"><g transform="rotate(-7 15 18)"><rect x="3.500" y="10.500" width="23" height="15.500" rx="1.500" fill="#333"/><rect x="1.500" y="15" width="2.500" height="6" fill="#333"/><rect x="26" y="15" width="2.500" height="6" fill="#333"/><circle cx="10.500" cy="16.500" r="3.600" fill="#fff"/><circle cx="19.500" cy="16" r="3.600" fill="#fff"/><circle cx="11.300" cy="17" r="1.900" fill="#333"/><circle cx="18.700" cy="16.600" r="1.900" fill="#333"/><path d="M14,22.500 Q17.500,23.500 19.500,20.500" fill="none" stroke="#fff" stroke-width="1.700"/></g><path d="M14,10 V5.500" stroke="#333" stroke-width="1.500"/><circle cx="14" cy="4.500" r="1.900" fill="#333"/><path d="M9.500,2.500 q-1,3 .3,5.500 M7,2 q-1.500,3.500 0,7 M18,2.500 q1,3 -.3,5.500 M20.500,2 q1.500,3.500 0,7" fill="none" stroke="#777" stroke-width=".9"/></svg>
<div class="t i" style="left:64.8px;top:491.6px;font-size:18px;transform:scaleX(0.9688);color:#9e9e9e;">Hook Spacer</div>
<svg class="ic" style="left:216.0px;top:486.5px;" width="10" height="28" viewBox="0 0 10 28"><path d="M5,0 V28" stroke="#222" stroke-width="2.400" stroke-dasharray="2.400 2"/><circle cx="5" cy="14" r="4.600" fill="#222"/></svg>
<svg class="ic" style="left:8.5px;top:527.5px;" width="12" height="18" viewBox="0 0 12 18"><path d="M2,2 L9.500,9 L2,16" fill="none" stroke="#444" stroke-width="2.700"/></svg>
<svg class="ic" style="left:34.5px;top:526.5px;" width="23" height="19" viewBox="0 0 23 19"><path d="M1,2.500 a1.500,1.500 0 0 1 1.500,-1.500 h6 l2.500,3 h9.500 a1.500,1.500 0 0 1 1.500,1.500 v11 a1.500,1.500 0 0 1 -1.500,1.500 h-18.500 a1.500,1.500 0 0 1 -1.500,-1.500 z" fill="#fff" stroke="#9a9a9a" stroke-width="1.400"/></svg>
<div class="t i" style="left:64.8px;top:527.6px;font-size:18px;transform:scaleX(0.9880);color:#9e9e9e;">Hook Crush Block (3)</div>
<svg class="ic" style="left:5.2px;top:567.0px;" width="18" height="12" viewBox="0 0 18 12"><path d="M2,2 L9,9.500 L16,2" fill="none" stroke="#444" stroke-width="2.700"/></svg>
<svg class="ic" style="left:34.5px;top:562.5px;" width="23" height="19" viewBox="0 0 23 19"><path d="M1,2.500 a1.500,1.500 0 0 1 1.500,-1.500 h6 l2.500,3 h9.500 a1.500,1.500 0 0 1 1.500,1.500 v11 a1.500,1.500 0 0 1 -1.500,1.500 h-18.500 a1.500,1.500 0 0 1 -1.500,-1.500 z" fill="#fff" stroke="#9a9a9a" stroke-width="1.400"/></svg>
<div class="t i" style="left:64.8px;top:563.6px;font-size:18px;transform:scaleX(0.9643);color:#9e9e9e;">Gearbox (6)</div>
<div class="abs" style="left:13px;top:590.5px;width:1.200px;height:142px;background:#d2d2d2"></div>
<svg class="ic" style="left:33.0px;top:596.0px;opacity:0.42;" width="24" height="24" viewBox="0 0 30 30"><path d="M5.2,24.6 L7.4,17.2 L20.3,4.3 a1.8,1.800 0 0 1 2.600,0 l2.600,2.600 a1.800,1.800 0 0 1 0,2.600 L12.600,22.400 Z M7.400,17.200 L12.600,22.400 M18.300,6.300 L23.500,11.500" fill="none" stroke="#3a3a3a" stroke-width="1.6" stroke-linejoin="round" stroke-linecap="round"/><path d="M5.200,24.600 L6.300,21 L8.800,23.500 Z" fill="#3a3a3a"/><path d="M3,27.600 H27.500" stroke="#1b5dbf" stroke-width="2"/></svg>
<div class="t i" style="left:64.8px;top:599.6px;font-size:18px;transform:scaleX(0.9824);color:#9e9e9e;">Gearbox Plate Sketch</div>
<svg class="ic" style="left:33.5px;top:632.5px;opacity:0.45;" width="23" height="23" viewBox="0 0 30 30"><path d="M2.600,3 H22.700 L26.700,7.100 V27 H6.700 L2.600,23.400 Z" fill="#fff" stroke="#3a3a3a" stroke-width="1.6" stroke-linejoin="round" stroke-linecap="round"/><path d="M2.600,3 L6.700,7.100 H26.700 M6.700,7.100 V27" fill="none" stroke="#3a3a3a" stroke-width="1.6" stroke-linejoin="round" stroke-linecap="round" stroke-width="1.200"/><polygon points="11.100,11.600 23.400,11.200 26.700,14.900 15.200,15.300" fill="#a8a8a8" stroke="#3a3a3a" stroke-width="1.100" stroke-linejoin="round"/><polygon points="11.100,11.600 15.200,15.300 15.200,26.800 11.100,23.100" fill="#858585" stroke="#3a3a3a" stroke-width="1.100" stroke-linejoin="round"/><rect x="15.200" y="15.300" width="11.500" height="11.600" fill="#989898" stroke="#3a3a3a" stroke-width="1.100"/></svg>
<div class="t i" style="left:64.8px;top:635.6px;font-size:18px;transform:scaleX(0.9790);color:#9e9e9e;">Gearbox Extrude</div>
<svg class="ic" style="left:33.5px;top:668.5px;opacity:0.45;" width="23" height="23" viewBox="0 0 30 30"><path d="M2.800,5.500 L5.800,2.800 H25 Q27.200,2.800 27.200,5 V27.200 H7.500 L2.800,23.500 Z" fill="#fff" stroke="#3a3a3a" stroke-width="1.6" stroke-linejoin="round" stroke-linecap="round"/><path d="M2.800,5.500 L6.500,7 V27 M6.500,7 H27" fill="none" stroke="#3a3a3a" stroke-width="1.6" stroke-linejoin="round" stroke-linecap="round" stroke-width="1.300"/><circle cx="17" cy="17" r="7.600" fill="#8a8a8a" stroke="#3a3a3a" stroke-width="1.6" stroke-linejoin="round" stroke-linecap="round"/><circle cx="17.500" cy="16.500" r="5.200" fill="#b5b5b5" stroke="#555" stroke-width="1"/><circle cx="18.500" cy="15" r="2.500" fill="#ddd"/></svg>
<div class="t i" style="left:64.8px;top:671.6px;font-size:18px;transform:scaleX(0.9563);color:#9e9e9e;">Hole</div>
<svg class="ic" style="left:33.5px;top:704.5px;opacity:0.45;" width="23" height="23" viewBox="0 0 30 30"><path d="M3,6 L5.500,3 H8.500 L13,8 V17 L15,19 V27.500 H7.500 L3,23.500 Z" fill="#fff" stroke="#3a3a3a" stroke-width="1.6" stroke-linejoin="round" stroke-linecap="round"/><path d="M3,6 L7.500,10 V27 M7.500,10 L8.500,3.500" fill="none" stroke="#3a3a3a" stroke-width="1.6" stroke-linejoin="round" stroke-linecap="round" stroke-width="1.200"/><path d="M27,6 L24.500,3 H18.500 V27.500 H27 Z" fill="#8a8a8a" stroke="#3a3a3a" stroke-width="1.6" stroke-linejoin="round" stroke-linecap="round"/><path d="M21.500,7 V19 L24.500,17 V7 Z" fill="#b5b5b5" stroke="#3a3a3a" stroke-width="1"/><rect x="13" y="5" width="5" height="14" fill="#d4d4d4" opacity=".8"/></svg>
<div class="t i" style="left:64.8px;top:707.6px;font-size:18px;color:#9e9e9e;">Gearbox Mirror</div>
</div>
<div class="abs" style="left:55px;top:915.500px;width:276px;height:1.600px;background:#cfcfcf"></div>
<svg class="ic" style="left:60.2px;top:930.5px;" width="18" height="12" viewBox="0 0 18 12"><path d="M2,2 L9,9.500 L16,2" fill="none" stroke="#444" stroke-width="2.700"/></svg>
<div class="t " style="left:87.5px;top:927.0px;font-size:18px;transform:scaleX(0.9854);color:#333;">Parts (4)</div>
<svg class="ic" style="left:89.6px;top:959.8px;" width="22" height="22" viewBox="0 0 22 22"><path d="M1,12.500 L4,10 H10.500 V3 L13.500,0.800 H18 L21.200,3.500 V21.200 H4.500 L1,18.500 Z" fill="#fff" stroke="#b5b5b5" stroke-width="1.400" stroke-linejoin="round"/><path d="M1,12.500 L4.500,15 V21 M4.500,15 H14.500 L21,21 M14.500,15 V6 L10.500,3 M14.500,6 L21,3.500" fill="none" stroke="#b5b5b5" stroke-width="1.100"/></svg>
<div class="t " style="left:117.5px;top:962.5px;font-size:18px;transform:scaleX(0.9735);color:#a6a6a6;">Origin Cube</div>
<svg class="ic" style="left:89.6px;top:995.8px;" width="22" height="22" viewBox="0 0 22 22"><path d="M1,12.500 L4,10 H10.500 V3 L13.500,0.800 H18 L21.200,3.500 V21.200 H4.500 L1,18.500 Z" fill="#fff" stroke="#555" stroke-width="1.400" stroke-linejoin="round"/><path d="M1,12.500 L4.500,15 V21 M4.500,15 H14.500 L21,21 M14.500,15 V6 L10.500,3 M14.500,6 L21,3.500" fill="none" stroke="#555" stroke-width="1.100"/></svg>
<div class="t " style="left:117.5px;top:998.5px;font-size:18px;transform:scaleX(1.0052);color:#333;">Tube 2&quot;x2&quot;x16&quot;</div>
<svg class="ic" style="left:89.6px;top:1031.8px;" width="22" height="22" viewBox="0 0 22 22"><path d="M1,12.500 L4,10 H10.500 V3 L13.500,0.800 H18 L21.200,3.500 V21.200 H4.500 L1,18.500 Z" fill="#fff" stroke="#555" stroke-width="1.400" stroke-linejoin="round"/><path d="M1,12.500 L4.500,15 V21 M4.500,15 H14.500 L21,21 M14.500,15 V6 L10.500,3 M14.500,6 L21,3.500" fill="none" stroke="#555" stroke-width="1.100"/></svg>
<div class="t " style="left:117.5px;top:1034.5px;font-size:18px;transform:scaleX(0.9863);color:#333;">Tube 1.5&quot;x1.5&quot;x18&quot;</div>
<svg class="ic" style="left:89.6px;top:1067.8px;" width="22" height="22" viewBox="0 0 22 22"><path d="M1,12.500 L4,10 H10.500 V3 L13.500,0.800 H18 L21.200,3.500 V21.200 H4.500 L1,18.500 Z" fill="#fff" stroke="#555" stroke-width="1.400" stroke-linejoin="round"/><path d="M1,12.500 L4.500,15 V21 M4.500,15 H14.500 L21,21 M14.500,15 V6 L10.500,3 M14.500,6 L21,3.500" fill="none" stroke="#555" stroke-width="1.100"/></svg>
<div class="t " style="left:117.5px;top:1070.5px;font-size:18px;transform:scaleX(1.0049);color:#333;">Crush Block</div>
<div class="abs" style="left:338.300px;top:717px;width:44.600px;height:46px;background:#fff;border:1px solid #cfcfcf;border-left:none"></div>
<svg class="ic" style="left:349.0px;top:730.0px;" width="24" height="22" viewBox="0 0 24 22"><path d="M1,2 L4,5.500 L7,2" fill="none" stroke="#333" stroke-width="1.600"/><path d="M4,7 V21 M8,3.500 H23 M8,9.500 H23 M8,15.500 H23 M8,21 H23" stroke="#333" stroke-width="1.700"/></svg>
<div class="abs" style="left:339px;top:105.500px;width:400px;height:360px;overflow:hidden"><div class="abs" style="left:.2px;top:4.500px;width:304.200px;height:276.600px;background:#fff;box-shadow:0 4px 16px rgba(0,0,0,.22),0 0 2px rgba(0,0,0,.10)"></div></div>
<div class="t b" style="left:347.6px;top:121.0px;font-size:17.3px;color:#2b2b2b;">Isolate</div>
<svg class="ic" style="left:616.0px;top:121.1px;" width="15" height="15" viewBox="0 0 15 15"><path d="M1,1 L14,14 M14,1 L1,14" stroke="#6a6a6a" stroke-width="1.500"/></svg>
<div class="abs" style="left:339.200px;top:147.600px;width:304.200px;height:1.300px;background:#dcdcdc"></div>
<div class="t b" style="left:344.0px;top:165.4px;font-size:18.4px;color:#6b6b6b;">Transparency controls</div>
<div class="abs" style="left:345.200px;top:209.400px;width:16.200px;height:16.200px;border:1.500px solid #858585;border-radius:3.500px;background:#fff"></div>
<div class="t " style="left:367.4px;top:208.8px;font-size:18px;transform:scaleX(1.0230);color:#6b6b6b;">Select transparent geometry</div>
<div class="abs" style="left:347px;top:247.400px;width:260px;height:10.200px;border:1.700px solid #707070;border-radius:5px;background:linear-gradient(90deg,#6e6e6e 0,#777 11%,#3f86ea 13%,#4d8fec 35%,#9fc2f3 65%,#f4f8fe 92%,#fff 100%)"></div>
<div class="abs" style="left:346px;top:244.800px;width:15.400px;height:15.400px;border:1.400px solid #8a8a8a;border-radius:8px;background:#fff;box-shadow:0 1px 2px rgba(0,0,0,.25)"></div>
<div class="t b" style="left:344.0px;top:279.8px;font-size:18.4px;transform:scaleX(0.9839);color:#6b6b6b;">Component controls</div>
<div class="t " style="left:348.0px;top:321.6px;font-size:18px;transform:scaleX(0.9849);color:#111;">Expand: distance</div>
<svg class="ic" style="left:587.8px;top:325.1px;" width="10.8" height="7.8" viewBox="0 0 10.8 7.8"><polygon points="0,0 10.800,0 5.400,7.800" fill="#626262"/></svg>
<div class="abs" style="left:339.200px;top:346.700px;width:267.500px;height:1.300px;background:#cfcfcf"></div>
<div class="abs" style="left:353px;top:366.300px;width:253.600px;height:3px;background:#747474"></div>
<div class="abs" style="left:346px;top:361.200px;width:15.400px;height:15.400px;border:1.400px solid #8a8a8a;border-radius:8px;background:#fff;box-shadow:0 1px 2px rgba(0,0,0,.25)"></div>
<div class="abs" style="left:619.400px;top:363.300px;width:17px;height:17px;border-radius:9px;background:#9d9d9d"></div>
<div class="t b" style="left:624.0px;top:365.1px;font-size:14px;color:#fff;">?</div>
<svg class="ic" style="left:13.0px;top:68.0px;" width="29" height="26" viewBox="0 0 29 26"><circle cx="5" cy="5" r="3.600" fill="none" stroke="#2b2b2b" stroke-width="2.200"/><path d="M5,8.600 V20 M5,17 Q5,12.500 12,12.500" fill="none" stroke="#2b2b2b" stroke-width="2.200"/><circle cx="5" cy="21.500" r="2.800" fill="#2b2b2b"/><circle cx="13" cy="12.200" r="2.600" fill="#2b2b2b"/><path d="M12,3 H29 M18.500,9.500 H29 M18.500,16 H29 M12,22.500 H29" stroke="#2b2b2b" stroke-width="2.400"/></svg>
<svg class="ic" style="left:15.0px;top:117.0px;" width="26" height="26" viewBox="0 0 26 26"><path d="M7,0 V26" stroke="#2b2b2b" stroke-width="2.600" stroke-dasharray="2.600 2.100"/><circle cx="7" cy="12" r="4.800" fill="#2b2b2b"/><path d="M19.500,14 V25 M14,19.500 H25" stroke="#1b5dbf" stroke-width="2.800"/></svg>
<svg class="ic" style="left:13.5px;top:165.5px;" width="27" height="24" viewBox="0 0 27 24"><ellipse cx="13.500" cy="10" rx="13.500" ry="9.500" fill="#2b2b2b"/><path d="M5,15 Q5,20 1,24 Q8,22.500 12,18 Z" fill="#2b2b2b"/></svg>
<svg class="ic" style="left:15.5px;top:213.5px;" width="24" height="25" viewBox="0 0 24 25"><path d="M17.500,8 V2.800 a1.600,1.600 0 0 0 -1.600,-1.600 H2.800 a1.600,1.600 0 0 0 -1.600,1.600 V22.200 a1.600,1.600 0 0 0 1.600,1.600 H15.900 a1.600,1.600 0 0 0 1.600,-1.600 V18.500" fill="none" stroke="#2b2b2b" stroke-width="2.400"/><path d="M4.500,6.500 H14 M4.500,10.500 H12 M4.500,14.500 H9.500" stroke="#2b2b2b" stroke-width="2"/><path d="M10.500,19.500 L11.500,15.500 L20,7 L23.500,10.500 L15,19 Z" fill="#2b2b2b"/></svg>
<svg class="ic" style="left:14.0px;top:260.5px;" width="26" height="26" viewBox="0 0 26 26"><circle cx="15" cy="15.500" r="8.800" fill="none" stroke="#2b2b2b" stroke-width="2.600"/><path d="M11.500,2 H18.500 M15,2 V6 M22,7 L24,5" stroke="#2b2b2b" stroke-width="2.300"/><path d="M15,15.500 L19,11" stroke="#2b2b2b" stroke-width="1.800"/><path d="M2.500,10.500 H8 M0.500,14 H6.500 M2.500,17.500 H7" stroke="#2b2b2b" stroke-width="1.500"/></svg>
<svg class="ic" style="left:15.5px;top:311.5px;" width="23" height="25" viewBox="0 0 23 25"><rect x="1.200" y="1.200" width="20.600" height="22.600" rx="2.500" fill="none" stroke="#2b2b2b" stroke-width="2.400"/><path d="M11.500,7 H18 M11.500,12.500 H18 M11.500,18 H18" stroke="#2b2b2b" stroke-width="2.600"/><path d="M4.500,6.800 l1.700,1.700 l3,-3.500 M4.500,12.300 l1.700,1.700 l3,-3.500 M4.500,17.800 l1.700,1.700 l3,-3.500" fill="none" stroke="#2b2b2b" stroke-width="1.600"/></svg>
<svg class="ic" style="left:0;top:0" width="2559" height="400" viewBox="0 0 2559 400"><g fill="#e3e7eb"><polygon points="2435.300,127.500 2445.500,139 2425,139"/><polygon points="2435.300,331 2445.500,319.500 2425,319.500"/><polygon points="2332.500,229 2345.500,219.500 2345.500,238.500"/><polygon points="2539,229 2526,219.500 2526,238.500"/></g><path d="M2373,160 Q2386,146 2406,139.500" fill="none" stroke="#e3e7eb" stroke-width="8"/><polygon points="2361,157 2378,150 2372,170 2361,171" fill="#e3e7eb"/><path d="M2465,139.500 Q2486,146 2498,160" fill="none" stroke="#e3e7eb" stroke-width="8"/><polygon points="2510,157 2493,150 2497,171 2510,171" fill="#e3e7eb"/><polygon points="2437.0,172.2 2487.7,206.5 2487.7,262.5 2424.5,286.0 2383.8,259.0 2383.8,195.7" fill="#e3e7eb" stroke="#e3e7eb" stroke-width="5" stroke-linejoin="round"/><polygon points="2435.6,182.0 2467.0,203.3 2427.8,210.0 2402.6,196.6" fill="#fff" stroke="#fff" stroke-width="7" stroke-linejoin="round"/><polygon points="2391.5,212.4 2416.8,225.8 2416.8,268.3 2391.5,251.6" fill="#fff" stroke="#fff" stroke-width="7" stroke-linejoin="round"/><polygon points="2436.5,227.2 2475.7,220.4 2475.7,255.1 2436.5,269.7" fill="#fff" stroke="#fff" stroke-width="7" stroke-linejoin="round"/><circle cx="2424.5" cy="219.4" r="8" fill="#fff"/><ellipse cx="2386.3" cy="198.7" rx="3.500" ry="5.500" fill="#fff"/><ellipse cx="2483.7" cy="208.5" rx="4.500" ry="6.500" fill="#fff" transform="rotate(-30 2483.7 208.5)"/><ellipse cx="2423.5" cy="281.5" rx="7" ry="3.500" fill="#fff"/><text transform="translate(2429,190) rotate(30) skewX(-25)" font-size="9" fill="#555" font-family="Liberation Sans,sans-serif">Top</text><text transform="translate(2389,230) rotate(40) skewY(8)" font-size="10" fill="#555" font-family="Liberation Sans,sans-serif">Front</text><text transform="translate(2438,253) rotate(-14)" font-size="13.500" fill="#444" font-family="Liberation Sans,sans-serif">Right</text><path d="M2378.400,258 L2462,234.500" stroke="#55c855" stroke-width="1" opacity=".8"/><path d="M2378.400,258 L2390,254.700" stroke="#35b035" stroke-width="1.800"/><path d="M2378.400,186.500 V258" stroke="#3a30d8" stroke-width="1.800"/><path d="M2378.400,258 L2416.500,290.500" stroke="#e83a3a" stroke-width="1.800"/><text x="2373.500" y="179.300" font-size="14.500" font-weight="bold" fill="#3a30d8" font-family="Liberation Sans,sans-serif">Z</text><text x="2418.500" y="302.300" font-size="14.500" font-weight="bold" fill="#e83a3a" font-family="Liberation Sans,sans-serif">X</text></svg>
<svg class="ic" style="left:2485.5px;top:307.3px;" width="26" height="26" viewBox="0 0 26 26"><polygon points="13,1.1999999999999993 23.266,7.1 13,13 2.734,7.1" fill="#f4f4f4" stroke="#3a3a3a" stroke-width="1.6" stroke-linejoin="round"/><polygon points="2.734,7.1 13,13 13,24.8 2.734,18.9" fill="#9a9a9a" stroke="#3a3a3a" stroke-width="1.6" stroke-linejoin="round"/><polygon points="23.266,7.1 13,13 13,24.8 23.266,18.9" fill="#e2e2e2" stroke="#3a3a3a" stroke-width="1.6" stroke-linejoin="round"/></svg>
<svg class="ic" style="left:2521.2px;top:316.6px;" width="10.5" height="6" viewBox="0 0 10.5 6"><polygon points="0,0 10.500,0 5.250,6" fill="#222"/></svg>
<div class="abs" style="left:2515.200px;top:504.0px;width:46px;height:183.8px;background:#fff;border:1px solid #cfcfcf"></div>
<div class="abs" style="left:2515.700px;top:550.2px;width:46px;height:1px;background:#cfcfcf"></div>
<div class="abs" style="left:2515.700px;top:595.9px;width:46px;height:1px;background:#cfcfcf"></div>
<div class="abs" style="left:2515.700px;top:641.6px;width:46px;height:1px;background:#cfcfcf"></div>
<div class="abs" style="left:2515.200px;top:701.3px;width:46px;height:274.0px;background:#fff;border:1px solid #cfcfcf"></div>
<div class="abs" style="left:2515.700px;top:747.3px;width:46px;height:1px;background:#cfcfcf"></div>
<div class="abs" style="left:2515.700px;top:792.8px;width:46px;height:1px;background:#cfcfcf"></div>
<div class="abs" style="left:2515.700px;top:838.3px;width:46px;height:1px;background:#cfcfcf"></div>
<div class="abs" style="left:2515.700px;top:883.8px;width:46px;height:1px;background:#cfcfcf"></div>
<div class="abs" style="left:2515.700px;top:929.3px;width:46px;height:1px;background:#cfcfcf"></div>
<svg class="ic" style="left:2523.8px;top:515.5px;" width="30" height="28" viewBox="0 0 30 28"><g stroke="#777" stroke-width=".8"><polygon points="3,18 12.500,1 19.500,4.500 12,19" fill="#5f5f5f"/><polygon points="10,18 20.500,6.500 26.500,12 17,20" fill="#8d8d8d"/><polygon points="9,18 14,13 24,18" fill="#d5d5d5"/></g><rect x="2.200" y="18.200" width="26" height="7.800" rx="2" fill="#fff" stroke="#555" stroke-width="1.200"/><rect x="20.500" y="18.800" width="7" height="6.600" fill="#d2d2d2"/><path d="M11,18.200 V26 M20,18.200 V26" stroke="#555" stroke-width="1"/><circle cx="6.500" cy="22" r="1.700" fill="none" stroke="#555" stroke-width="1"/></svg>
<svg class="ic" style="left:0;top:0" width="2559" height="700" viewBox="0 0 2559 700"><path d="M2540.5,565.0 L2550.8,570.65 V581.9499999999999 L2540.5,587.5999999999999 L2530.2,581.9499999999999 V570.65 Z" fill="#fff" stroke="#333" stroke-width="1.6" stroke-linejoin="round"/><path d="M2530.2,570.65 L2540.5,576.3 L2550.8,570.65 M2540.5,576.3 V587.5999999999999" fill="none" stroke="#333" stroke-width="1.6" stroke-linejoin="round"/><rect x="2524.5" y="560.8" width="14.3" height="11" fill="#1f5fc8"/><path d="M2524.5,564.47 h14.3 M2524.5,568.13 h14.3 M2529.27,560.8 v11 M2534.03,560.8 v11" stroke="#fff" stroke-width=".9" opacity=".85"/><path d="M2538.8,615.7 L2546.8,619.1 V625.9 L2538.8,629.3 L2530.8,625.9 V619.1 Z" fill="#fff" stroke="#333" stroke-width="1.3" stroke-linejoin="round"/><path d="M2530.8,619.1 L2538.8,622.5 L2546.8,619.1 M2538.8,622.5 V629.3" fill="none" stroke="#333" stroke-width="1.3" stroke-linejoin="round"/><rect x="2524.5" y="607.5" width="14.3" height="11" fill="#3a3a3a"/><path d="M2524.5,611.17 h14.3 M2524.5,614.83 h14.3 M2529.27,607.5 v11 M2534.03,607.5 v11" stroke="#fff" stroke-width=".9" opacity=".85"/><path d="M2530.500,617.500 q-2.500,0 -2.500,2.500 v2 q0,2 -2,2.200 q2,.2 2,2.200 v2.500 q0,2.500 2.500,2.500 M2547,610 q2.500,0 2.500,2.500 v5.500 q0,2.800 2,3 q-2,.2 -2,3 v5.500 q0,2.500 -2.500,2.500" fill="none" stroke="#333" stroke-width="1.300"/><path d="M2527.500,663.500 q-2.200,6.500 1,12.500 M2547,656 q4.500,10 0,20" fill="none" stroke="#222" stroke-width="2.100" stroke-linecap="round"/><text x="2529.500" y="673" font-size="25" font-weight="bold" font-style="italic" fill="#222" stroke="#222" stroke-width=".5" font-family="Liberation Serif,serif">x</text><rect x="2525.6" y="653.2" width="12.8" height="10" fill="#3a3a3a"/><path d="M2525.6,656.53 h12.8 M2525.6,659.87 h12.8 M2529.87,653.2 v10 M2534.13,653.2 v10" stroke="#fff" stroke-width=".9" opacity=".85"/></svg>
<div class="abs" style="left:2523.0px;top:710.0px;width:31px;height:31px;border-radius:4px;background:#e2e2e2"></div>
<div class="abs" style="left:2525.0px;top:712.1px;width:27.600px;height:27.200px;background:#1a5fd0;border:1.500px solid #15233f"></div>
<div class="t b" style="left:2527.0px;top:711.2px;font-size:27px;font-family:'Liberation Serif',serif;color:#fff;transform:scaleX(.53);text-shadow:0 0 1px #000">MK</div>
<div class="abs" style="left:2523.0px;top:755.0px;width:31px;height:31px;border-radius:4px;background:#e2e2e2"></div>
<svg class="ic" style="left:2524.5px;top:757.0px;" width="28" height="28" viewBox="0 0 30 30"><g transform="rotate(-7 15 18)"><rect x="3.500" y="10.500" width="23" height="15.500" rx="1.500" fill="#333"/><rect x="1.500" y="15" width="2.500" height="6" fill="#333"/><rect x="26" y="15" width="2.500" height="6" fill="#333"/><circle cx="10.500" cy="16.500" r="3.600" fill="#8fc2f7"/><circle cx="19.500" cy="16" r="3.600" fill="#8fc2f7"/><circle cx="11.300" cy="17" r="1.900" fill="#333"/><circle cx="18.700" cy="16.600" r="1.900" fill="#333"/><path d="M14,22.500 Q17.500,23.500 19.500,20.500" fill="none" stroke="#fff" stroke-width="1.700"/></g><path d="M14,10 V5.500" stroke="#333" stroke-width="1.500"/><circle cx="14" cy="4.500" r="1.900" fill="#333"/><path d="M9.500,2.500 q-1,3 .3,5.500 M7,2 q-1.500,3.500 0,7 M18,2.500 q1,3 -.3,5.500 M20.500,2 q1.500,3.500 0,7" fill="none" stroke="#3f7fd0" stroke-width=".9"/></svg>
<div class="abs" style="left:2523.0px;top:800.0px;width:31px;height:31px;border-radius:4px;background:#fff"></div>
<div class="abs" style="left:2523.0px;top:800.0px;width:31px;height:31px;border-radius:4px;border:1.200px solid #d4d4d4"></div>
<svg class="ic" style="left:2525.5px;top:804.5px;" width="26" height="22" viewBox="0 0 26 22"><path d="M1,11 H8 M1,11 L4.500,7.500 M1,11 L4.500,14.500" fill="none" stroke="#333" stroke-width="1.500"/><path d="M12,1.500 q-3,0 -3,3 v4 q0,2.300 -2,2.500 q2,.2 2,2.500 v4 q0,3 3,3" fill="none" stroke="#333" stroke-width="1.400"/><g transform="translate(12 3)"><polygon points="7,1.5 12.655000000000001,4.75 7,8 1.3449999999999998,4.75" fill="#fff" stroke="#3a3a3a" stroke-width="1.2" stroke-linejoin="round"/><polygon points="1.3449999999999998,4.75 7,8 7,14.5 1.3449999999999998,11.25" fill="#fff" stroke="#3a3a3a" stroke-width="1.2" stroke-linejoin="round"/><polygon points="12.655000000000001,4.75 7,8 7,14.5 12.655000000000001,11.25" fill="#fff" stroke="#3a3a3a" stroke-width="1.2" stroke-linejoin="round"/></g></svg>
<div class="abs" style="left:2523.0px;top:845.0px;width:31px;height:31px;border-radius:4px;background:#dcdcdc"></div>
<svg class="ic" style="left:2524.5px;top:850.5px;" width="28" height="25" viewBox="0 0 28 25"><path d="M14,0.500 L27.500,24.500 H17.500 Q17,17.500 8.500,14.500 Q15,10 14,0.500 Z" fill="#29a9e0"/><path d="M7.500,16.500 Q13.500,18.500 14,24.500 H0.500 Z" fill="#29a9e0"/></svg>
<div class="abs" style="left:2523.0px;top:891.5px;width:31px;height:31px;border-radius:4px;background:#dde9dd"></div>
<div class="abs" style="left:2524.5px;top:893.4px;width:28.200px;height:28.200px;background:#4caf50;border-radius:2px"></div>
<svg class="ic" style="left:2527.7px;top:899.5px;" width="22" height="18" viewBox="0 0 22 18"><path d="M1,2 Q6.500,0.300 11,3 Q15.500,0.300 21,2 V16 Q15.500,14.500 11,17.500 Q6.500,14.500 1,16 Z" fill="#fff"/><path d="M11,3 V17.500" stroke="#4caf50" stroke-width="1.500"/></svg>
<div class="abs" style="left:2523.0px;top:937.0px;width:31px;height:31px;border-radius:4px;background:#d5d5d5"></div>
<div class="abs" style="left:2524.7px;top:938.8px;width:27.800px;height:28px;background:#1a5fd0;border:2px solid #15233f"></div>
<svg class="ic" style="left:2527.7px;top:944.5px;" width="22" height="18" viewBox="0 0 22 18"><path d="M1,2 Q6.500,0.300 11,3 Q15.500,0.300 21,2 V16 Q15.500,14.500 11,17.500 Q6.500,14.500 1,16 Z" fill="#fff"/><path d="M11,3 V17.500" stroke="#1a5fd0" stroke-width="1.500"/></svg>
<svg class="ic" style="left:2423.4px;top:1370.0px;" width="24" height="19" viewBox="0 0 24 19"><path d="M8,6 V10.500 H1.500 V17.500 H17 Q23,17.500 23,12 V6 Z" fill="#fff" stroke="#222" stroke-width="1.600" stroke-linejoin="round"/><path d="M8,9.500 Q15.500,13.500 23,8" fill="none" stroke="#222" stroke-width="1.300"/><ellipse cx="15.500" cy="6" rx="7.500" ry="4.800" fill="#fff" stroke="#222" stroke-width="1.600"/><ellipse cx="15.500" cy="5.800" rx="3.600" ry="1.900" fill="#fff" stroke="#222" stroke-width="1.400"/><path d="M4.500,14.800 V17 M7.500,14.800 V17 M10.500,14.800 V17 M13.500,14.800 V17 M16.500,14.800 V17" stroke="#222" stroke-width="1"/></svg>
<svg class="ic" style="left:2469.4px;top:1370.5px;" width="29" height="19" viewBox="0 0 29 19"><path d="M1.500,16 Q1.500,1 14.500,1 Q27.500,1 27.500,16 Q27.500,18 25.500,18 H3.500 Q1.500,18 1.500,16 Z" fill="#fff" stroke="#222" stroke-width="1.800"/><path d="M7,14 Q7,6 14.500,6 Q22,6 22,14 H17.500 Q17.500,11.500 14.500,11.500 Q11.500,11.500 11.500,14 Z" fill="#fff" stroke="#222" stroke-width="1.500"/><path d="M4,15 Q4,3.500 14.500,3.500 Q25,3.500 25,15" fill="none" stroke="#222" stroke-width="1.500" stroke-dasharray="1 1.300"/></svg>
<svg class="ic" style="left:2521.5px;top:1368.5px;" width="21" height="21" viewBox="0 0 21 21"><path d="M4,1 H17 M10.500,1 V17" stroke="#222" stroke-width="1.700" fill="none"/><path d="M4,1 L1,13.500 H7 Z M17,1 L14,13.500 H20 Z" fill="none" stroke="#222" stroke-width="1.300"/><path d="M1,13.500 H7 L6,15 H2 Z M14,13.500 H20 L19,15 H15 Z" fill="#222"/><path d="M0.500,19 H20.500" stroke="#222" stroke-width="2.800"/></svg>
<div class="abs" style="left:54px;top:1397.800px;width:2505px;height:1.400px;background:#cdcdcd"></div>
<svg class="ic" style="left:14.0px;top:1411.5px;" width="26" height="21" viewBox="0 0 26 21"><path d="M1,0.300 H24 Q25,0.300 25,1.300 V10.500 H0.500 V1.300 Q0.500,0.300 1.500,0.300 Z" fill="#2b2b2b"/><circle cx="15" cy="10" r="8.300" fill="#fafafa"/><circle cx="15" cy="10" r="5.300" fill="#fafafa" stroke="#2b2b2b" stroke-width="2.500"/><path d="M19,14 L24.500,19.500" stroke="#2b2b2b" stroke-width="2.800"/></svg>
<svg class="ic" style="left:68.0px;top:1408.2px;" width="20.5" height="20.5" viewBox="0 0 20.5 20.5"><path d="M10.250,0 V20.500 M0,10.250 H20.500" stroke="#646464" stroke-width="3.600"/></svg>
<svg class="ic" style="left:101.0px;top:1400.2px;" width="238" height="35.6" viewBox="0 0 238 35.6"><polygon points="0,0 43,0 52.500,17.800 43,35.600 2,35.600 0,33.600" fill="#e9e9e9"/><polygon points="47,0 226,0 236,17.800 226,35.600 47,35.600 56.500,17.800" fill="#fff"/><path d="M43,0 L52.500,17.800 L43,35.600 M226,0 L236,17.800 L226,35.600" fill="none" stroke="#d6d6d6" stroke-width="1"/></svg>
<svg class="ic" style="left:114.3px;top:1402.7px;" width="25" height="25" viewBox="0 0 25 25"><path d="M12.500,0.300 L25,12 V25 H16 V16.500 H9 V25 H0 V12 Z M18,1.500 H21.800 V7.500 L18,4 Z" fill="#636363"/></svg>
<div class="t " style="left:180.0px;top:1407.1px;font-size:19px;transform:scaleX(1.0091);color:#707070;">Exercise 4 - Tel</div>
<div class="abs" style="left:341px;top:1398.500px;width:278.300px;height:37.300px;background:#e9e9e9;border-radius:0 0 6px 6px;box-shadow:0 1px 1.500px rgba(0,0,0,.12)"></div>
<svg class="ic" style="left:359.2px;top:1406.5px;" width="19" height="19" viewBox="0 0 19 19"><circle cx="9.500" cy="9.500" r="9.300" fill="#6e9fdb"/><circle cx="9.500" cy="9.500" r="3.100" fill="#fff"/><circle cx="9.500" cy="3" r="1.200" fill="#fff"/><circle cx="9.500" cy="16" r="1.200" fill="#fff"/></svg>
<svg class="ic" style="left:383.2px;top:1404.0px;" width="26" height="25" viewBox="0 0 26 25"><path d="M1,4 L4,1 H20 L25,5.500 V24 H5.500 L1,20 Z" fill="#fff" stroke="#333" stroke-width="1.500" stroke-linejoin="round"/><path d="M1,4 L5.500,8 V24 M5.500,8 H25" fill="none" stroke="#333" stroke-width="1.200"/><path d="M2,5 L5,2 H18 V14.500 L15,17 H2 Z" fill="#8a8a8a"/><path d="M2,5 H15 V17 M15,5 L18,2" fill="none" stroke="#555" stroke-width="1"/></svg>
<div class="t " style="left:414.8px;top:1408.8px;font-size:18.7px;transform:scaleX(1.0191);color:#6a6a6a;">Exercise 4 Assembly</div>
<div class="abs" style="left:620px;top:1398px;width:275.700px;height:39px;background:#fff;border-bottom:3.200px solid #1b57b5;border-radius:0 0 5px 5px"></div>
<svg class="ic" style="left:635.8px;top:1403.5px;" width="25" height="26" viewBox="0 0 25 26"><path d="M1,8.500 L3.500,6 H10 L12,8 V25 H4 L1,22.500 Z" fill="#fff" stroke="#333" stroke-width="1.500" stroke-linejoin="round"/><path d="M1,8.500 L4,11 V25 M4,11 H12" fill="none" stroke="#333" stroke-width="1.100"/><path d="M12,3.500 L14.500,1 H20.500 L24,4 V25 H15 L12,22.500 Z" fill="#fff" stroke="#333" stroke-width="1.500" stroke-linejoin="round"/><path d="M12,3.500 L15,6 V25 M15,6 H24" fill="none" stroke="#333" stroke-width="1.100"/></svg>
<div class="t " style="left:665.5px;top:1408.8px;font-size:18.7px;transform:scaleX(1.0076);color:#2f2f2f;">Exercise 4 Part Studio</div>
</body></html>
